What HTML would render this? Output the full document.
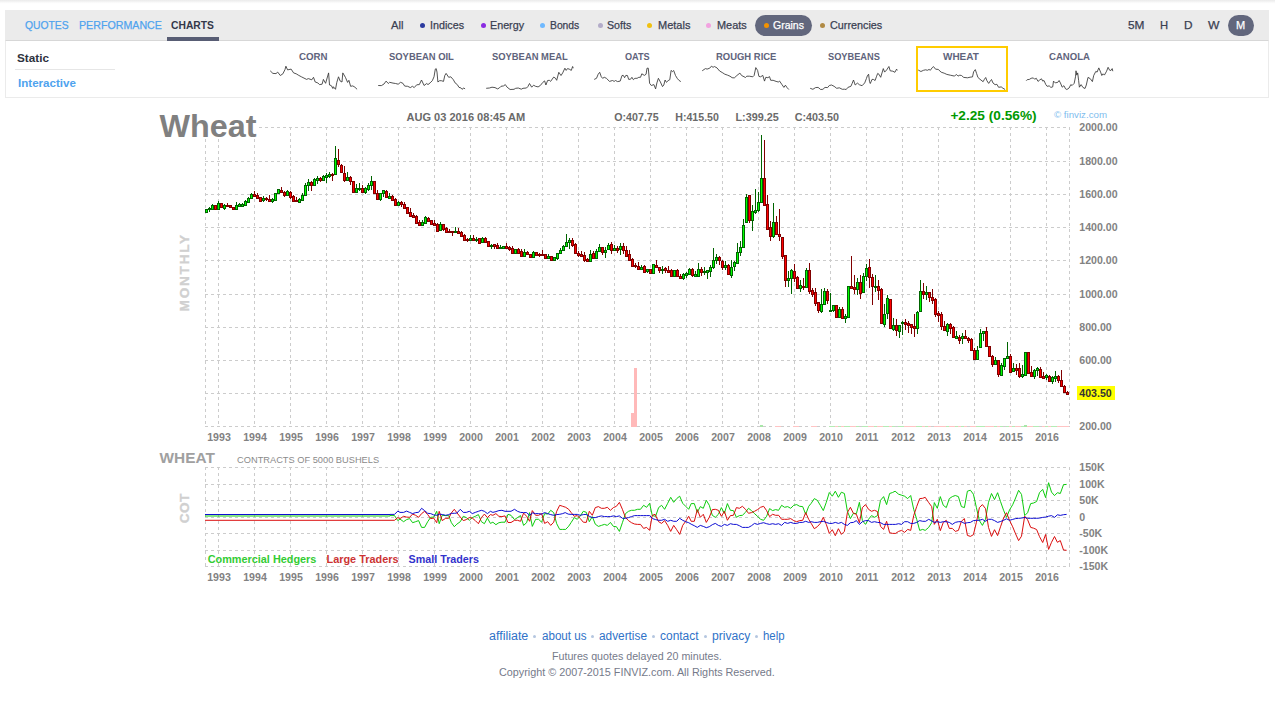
<!DOCTYPE html>
<html lang="en"><head><meta charset="utf-8"><title>Futures Charts - Wheat</title>
<style>
html,body{margin:0;padding:0;background:#fff}
body{width:1275px;height:722px;position:relative;overflow:hidden;font-family:"Liberation Sans", sans-serif}
.t{position:absolute;white-space:nowrap;line-height:1;transform-origin:0 85%;display:block}
#topshade{position:absolute;left:0;top:0;width:1275px;height:4px;background:linear-gradient(#ebebeb 0,#f1f1f1 30%,#fdfdfd 75%,#fff 100%)}
#bar{position:absolute;left:5px;top:10px;width:1264px;height:30px;background:#ebebeb}
#panel{position:absolute;left:5px;top:40px;width:1262px;height:56px;border:1px solid #ebebeb;border-top-color:#d7d7d7;background:#fff}
#tabline{position:absolute;left:167px;top:37px;width:52px;height:4px;background:#585d74}
.pill{position:absolute;background:#62677d;border-radius:11px;height:21px;top:15px}
.dot{position:absolute;width:5px;height:5px;border-radius:50%;top:22.5px}
.fdot{position:absolute;width:3px;height:3px;border-radius:50%;top:635px;background:#b5c6e0}
#sep{position:absolute;left:15px;top:69px;width:100px;height:1px;background:#e6e6e6}
#sel{position:absolute;left:916px;top:46px;width:88px;height:42px;border:2px solid #ffcc00}
svg{position:absolute;left:0;top:0}
svg text{white-space:pre}
</style></head><body>
<div id="topshade"></div>
<div id="bar"></div><div id="panel"></div><div id="tabline"></div>
<div class="pill" style="left:755px;width:57px"></div>
<div class="pill" style="left:1228px;width:26px"></div>
<div class="dot" style="left:420.4px;background:#2b3a9f"></div>
<div class="dot" style="left:480.5px;background:#8a2be2"></div>
<div class="dot" style="left:540.1px;background:#6fb9ff"></div>
<div class="dot" style="left:597.5px;background:#b3acc9"></div>
<div class="dot" style="left:647.3px;background:#f0c010"></div>
<div class="dot" style="left:706.3px;background:#f2a2e0"></div>
<div class="dot" style="left:763.5px;background:#f39200"></div>
<div class="dot" style="left:820.1px;background:#b08a44"></div>
<div class="fdot" style="left:533.3px"></div>
<div class="fdot" style="left:590.5px"></div>
<div class="fdot" style="left:652.0px"></div>
<div class="fdot" style="left:703.5px"></div>
<div class="fdot" style="left:755.2px"></div>
<div id="sep"></div><div id="sel"></div>
<a class="t" id="t0" style="left:25px;top:20.27px;font-size:11.5px;font-weight:normal;color:#4fa3ee;transform:scale(0.8980,1);-webkit-text-stroke:0.25px #4fa3ee">QUOTES</a>
<a class="t" id="t1" style="left:79px;top:20.27px;font-size:11.5px;font-weight:normal;color:#4fa3ee;transform:scale(0.9270,1);-webkit-text-stroke:0.25px #4fa3ee">PERFORMANCE</a>
<span class="t" id="t2" style="left:171px;top:20.27px;font-size:11.5px;font-weight:bold;color:#33384a;transform:scale(0.8958,1)">CHARTS</span>
<span class="t" id="t3" style="left:391px;top:20.27px;font-size:11.5px;font-weight:normal;color:#3a3f52;transform:scale(0.9769,1);-webkit-text-stroke:0.25px #3a3f52">All</span>
<span class="t" id="t4" style="left:430.4px;top:20.27px;font-size:11.5px;font-weight:normal;color:#3a3f52;transform:scale(0.9333,1);-webkit-text-stroke:0.25px #3a3f52">Indices</span>
<span class="t" id="t5" style="left:490.4px;top:20.27px;font-size:11.5px;font-weight:normal;color:#3a3f52;transform:scale(0.9333,1);-webkit-text-stroke:0.25px #3a3f52">Energy</span>
<span class="t" id="t6" style="left:550.4px;top:20.27px;font-size:11.5px;font-weight:normal;color:#3a3f52;transform:scale(0.8970,1);-webkit-text-stroke:0.25px #3a3f52">Bonds</span>
<span class="t" id="t7" style="left:607px;top:20.27px;font-size:11.5px;font-weight:normal;color:#3a3f52;transform:scale(0.9231,1);-webkit-text-stroke:0.25px #3a3f52">Softs</span>
<span class="t" id="t8" style="left:657.5px;top:20.27px;font-size:11.5px;font-weight:normal;color:#3a3f52;transform:scale(0.9559,1);-webkit-text-stroke:0.25px #3a3f52">Metals</span>
<span class="t" id="t9" style="left:716.5px;top:20.27px;font-size:11.5px;font-weight:normal;color:#3a3f52;transform:scale(0.9516,1);-webkit-text-stroke:0.25px #3a3f52">Meats</span>
<span class="t" id="t10" style="left:772.9px;top:20.27px;font-size:11.5px;font-weight:normal;color:#ffffff;transform:scale(0.9147,1);-webkit-text-stroke:0.25px #ffffff">Grains</span>
<span class="t" id="t11" style="left:830.4px;top:20.27px;font-size:11.5px;font-weight:normal;color:#3a3f52;transform:scale(0.9393,1);-webkit-text-stroke:0.25px #3a3f52">Currencies</span>
<span class="t" id="t12" style="left:1127.5px;top:20.27px;font-size:11.5px;font-weight:normal;color:#3a3f52;transform:scale(1.0312,1);-webkit-text-stroke:0.25px #3a3f52">5M</span>
<span class="t" id="t13" style="left:1160.4px;top:20.27px;font-size:11.5px;font-weight:normal;color:#3a3f52;transform:scale(0.9750,1);-webkit-text-stroke:0.25px #3a3f52">H</span>
<span class="t" id="t14" style="left:1184.4px;top:20.27px;font-size:11.5px;font-weight:normal;color:#3a3f52;transform:scale(1.0250,1);-webkit-text-stroke:0.25px #3a3f52">D</span>
<span class="t" id="t15" style="left:1208.4px;top:20.27px;font-size:11.5px;font-weight:normal;color:#3a3f52;transform:scale(1.0545,1);-webkit-text-stroke:0.25px #3a3f52">W</span>
<span class="t" id="t16" style="left:1235.9px;top:20.27px;font-size:11.5px;font-weight:normal;color:#ffffff;transform:scale(0.9600,1);-webkit-text-stroke:0.25px #ffffff">M</span>
<span class="t" id="t17" style="left:16.7px;top:52.97px;font-size:11.5px;font-weight:bold;color:#2e3240;transform:scale(1.0194,1)">Static</span>
<a class="t" id="t18" style="left:17.6px;top:78.27px;font-size:11.5px;font-weight:bold;color:#4fa3ee;transform:scale(1.0069,1)">Interactive</a>
<span class="t" id="t19" style="left:299.3px;top:52.37px;font-size:10.2px;font-weight:bold;color:#5f647c;transform:scale(0.9500,1) rotate(0.03deg)">CORN</span>
<span class="t" id="t20" style="left:388.9px;top:52.37px;font-size:10.2px;font-weight:bold;color:#5f647c;transform:scale(0.9243,1) rotate(0.03deg)">SOYBEAN OIL</span>
<span class="t" id="t21" style="left:491.6px;top:52.37px;font-size:10.2px;font-weight:bold;color:#5f647c;transform:scale(0.9220,1) rotate(0.03deg)">SOYBEAN MEAL</span>
<span class="t" id="t22" style="left:624.9px;top:52.37px;font-size:10.2px;font-weight:bold;color:#5f647c;transform:scale(0.8964,1) rotate(0.03deg)">OATS</span>
<span class="t" id="t23" style="left:715.5px;top:52.37px;font-size:10.2px;font-weight:bold;color:#5f647c;transform:scale(0.9277,1) rotate(0.03deg)">ROUGH RICE</span>
<span class="t" id="t24" style="left:827.8px;top:52.37px;font-size:10.2px;font-weight:bold;color:#5f647c;transform:scale(0.9070,1) rotate(0.03deg)">SOYBEANS</span>
<span class="t" id="t25" style="left:943.4px;top:52.37px;font-size:10.2px;font-weight:bold;color:#5f647c;transform:scale(0.9784,1) rotate(0.03deg)">WHEAT</span>
<span class="t" id="t26" style="left:1049px;top:52.37px;font-size:10.2px;font-weight:bold;color:#5f647c;transform:scale(0.9386,1) rotate(0.03deg)">CANOLA</span>
<a class="t" id="t27" style="left:489.2px;top:629.84px;font-size:12px;font-weight:normal;color:#2f72c8;transform:scale(1.0395,1)">affiliate</a>
<a class="t" id="t28" style="left:541.5px;top:629.84px;font-size:12px;font-weight:normal;color:#2f72c8;transform:scale(0.9674,1)">about us</a>
<a class="t" id="t29" style="left:598.5px;top:629.84px;font-size:12px;font-weight:normal;color:#2f72c8;transform:scale(0.9857,1)">advertise</a>
<a class="t" id="t30" style="left:659.9px;top:629.84px;font-size:12px;font-weight:normal;color:#2f72c8;transform:scale(0.9974,1)">contact</a>
<a class="t" id="t31" style="left:711.6px;top:629.84px;font-size:12px;font-weight:normal;color:#2f72c8;transform:scale(1.0105,1)">privacy</a>
<a class="t" id="t32" style="left:762.8px;top:629.84px;font-size:12px;font-weight:normal;color:#2f72c8;transform:scale(0.9522,1)">help</a>
<span class="t" id="t33" style="left:552.1px;top:651.19px;font-size:11px;font-weight:normal;color:#757a8a;transform:scale(0.9709,1)">Futures quotes delayed 20 minutes.</span>
<span class="t" id="t34" style="left:498.8px;top:667.19px;font-size:11px;font-weight:normal;color:#757a8a;transform:scale(0.9822,1)">Copyright © 2007-2015 FINVIZ.com. All Rights Reserved.</span>
<svg width="1275" height="722" viewBox="0 0 1275 722">
<path d="M270.2 70.8 L272.9 73.4 L276.0 73.6 L277.7 72.1 L280.3 75.5 L282.9 73.8 L285.0 69.5 L285.9 66.2 L287.6 69.9 L291.1 69.1 L293.6 72.9 L296.2 73.8 L298.8 75.4 L301.4 76.8 L304.0 78.1 L306.6 79.4 L308.3 78.6 L311.8 79.8 L313.5 77.3 L315.2 82.0 L317.8 82.9 L319.5 84.6 L322.1 84.2 L323.4 79.4 L325.6 83.3 L328.6 72.9 L329.5 85.0 L331.2 85.5 L332.9 88.5 L333.3 86.7 L335.5 89.3 L336.8 82.4 L338.5 76.8 L340.2 81.1 L342.0 82.0 L342.8 72.9 L345.4 77.3 L347.6 82.4 L348.9 80.3 L350.6 86.3 L352.8 85.9 L354.9 87.2 L357.1 89.3" fill="none" stroke="#353535" stroke-width="0.85" stroke-linejoin="round"/>
<path d="M378.2 85.5 L381.4 85.6 L384.0 84.0 L386.1 81.1 L388.3 83.5 L389.6 82.3 L393.0 83.1 L395.6 83.5 L398.2 84.2 L400.6 82.3 L402.9 83.3 L404.7 86.1 L407.7 86.3 L410.3 87.6 L412.4 86.3 L414.2 87.6 L416.7 84.8 L419.3 84.6 L421.5 80.0 L424.1 85.5 L426.7 83.5 L428.0 84.6 L430.1 82.9 L432.3 80.7 L434.0 76.8 L435.3 69.1 L436.2 68.6 L437.0 72.1 L437.9 82.0 L439.6 80.7 L441.3 80.7 L443.5 81.4 L444.8 75.5 L446.1 73.4 L448.7 77.3 L450.8 76.8 L453.4 79.8 L455.1 82.9 L457.3 84.6 L459.0 87.4 L460.8 87.8 L462.0 89.3 L463.8 88.0 L465.1 88.9" fill="none" stroke="#353535" stroke-width="0.85" stroke-linejoin="round"/>
<path d="M486.2 88.3 L489.4 88.0 L492.0 87.2 L495.0 87.6 L497.6 88.9 L499.3 88.0 L501.0 86.3 L503.6 85.9 L505.3 84.6 L507.1 87.2 L510.1 89.5 L514.0 89.3 L515.7 88.3 L518.3 88.0 L521.3 89.2 L523.0 88.3 L526.5 88.0 L527.8 86.7 L529.5 83.5 L531.7 87.2 L533.6 85.2 L535.5 86.3 L538.1 86.9 L540.3 85.5 L542.9 82.3 L544.6 80.9 L545.9 85.0 L547.6 80.5 L549.3 80.3 L550.6 81.4 L553.7 77.1 L555.4 78.1 L556.7 80.3 L558.8 72.3 L561.0 75.5 L562.7 72.9 L564.9 68.2 L566.2 70.4 L567.5 68.6 L569.2 69.1 L571.3 70.4 L572.6 66.5 L573.3 68.2" fill="none" stroke="#353535" stroke-width="0.85" stroke-linejoin="round"/>
<path d="M594.2 79.4 L596.5 78.3 L598.2 74.2 L599.7 72.3 L601.3 76.8 L602.6 78.3 L604.3 77.3 L606.4 78.3 L609.5 81.4 L612.5 80.5 L614.2 81.4 L615.5 80.5 L617.6 81.6 L620.2 81.1 L622.0 75.5 L623.3 75.4 L624.6 77.7 L625.8 75.4 L627.4 75.5 L628.7 79.4 L630.6 79.2 L631.9 77.3 L633.4 79.7 L634.9 78.3 L637.1 78.3 L638.8 77.3 L640.5 77.3 L641.8 73.8 L644.4 75.4 L646.1 74.2 L647.0 68.2 L648.3 68.2 L649.6 83.3 L651.3 85.5 L653.9 84.6 L655.6 88.9 L656.9 82.9 L658.4 78.3 L660.4 82.0 L662.5 86.6 L663.8 85.0 L665.1 80.0 L666.4 82.3 L668.1 80.7 L669.8 79.7 L671.1 70.4 L672.4 71.6 L673.7 70.5 L675.5 75.5 L677.2 78.3 L678.9 80.3 L680.8 81.6" fill="none" stroke="#353535" stroke-width="0.85" stroke-linejoin="round"/>
<path d="M702.2 70.8 L705.4 68.6 L707.1 69.1 L709.7 68.2 L711.4 66.2 L713.1 67.3 L714.4 66.5 L717.0 67.9 L719.6 71.0 L722.2 72.5 L724.8 74.2 L727.4 75.1 L730.0 76.2 L732.1 77.7 L734.3 77.9 L736.9 75.5 L739.9 73.1 L741.6 75.5 L745.5 77.5 L746.8 76.2 L749.4 76.2 L752.8 76.8 L754.1 75.5 L755.8 67.6 L757.6 70.4 L758.9 76.4 L760.6 76.8 L762.8 75.4 L764.5 81.1 L765.8 77.3 L767.9 77.7 L769.5 76.6 L770.7 80.3 L773.1 80.3 L776.1 81.4 L778.3 82.0 L779.6 81.1 L781.7 84.2 L783.9 87.4 L785.4 85.2 L786.9 87.4 L788.8 89.5" fill="none" stroke="#353535" stroke-width="0.85" stroke-linejoin="round"/>
<path d="M810.2 88.3 L812.9 89.3 L815.5 87.6 L818.1 87.4 L820.7 89.5 L822.9 89.3 L825.0 87.4 L827.6 87.6 L829.3 85.5 L831.5 85.0 L834.1 86.3 L836.7 88.3 L839.3 87.8 L842.3 89.3 L844.4 89.2 L846.2 89.5 L847.9 87.4 L850.9 86.3 L852.2 83.3 L853.5 80.0 L855.2 85.0 L857.4 83.1 L859.5 84.8 L862.1 85.7 L864.7 82.9 L866.4 78.6 L867.3 76.0 L868.6 74.2 L869.5 81.6 L870.3 83.5 L872.0 79.4 L873.3 79.4 L875.1 80.5 L876.4 76.8 L877.7 73.4 L878.9 74.2 L880.7 77.3 L883.3 68.6 L884.6 72.1 L886.7 69.9 L888.9 66.5 L890.2 70.8 L892.8 71.2 L894.9 72.3 L896.6 69.1 L897.3 70.4" fill="none" stroke="#353535" stroke-width="0.85" stroke-linejoin="round"/>
<path d="M918.2 70.0 L920.9 71.5 L923.5 70.3 L925.7 69.8 L927.4 70.3 L929.1 69.4 L930.3 70.3 L932.2 67.7 L933.5 66.6 L935.6 69.2 L938.2 69.4 L941.2 72.2 L944.2 73.2 L946.8 74.4 L950.3 75.2 L954.6 76.1 L956.3 74.4 L958.0 76.1 L959.8 75.2 L961.5 75.5 L963.7 77.4 L967.5 77.8 L970.1 77.2 L972.5 76.9 L973.6 71.8 L975.3 69.6 L976.6 73.5 L977.9 77.4 L980.0 79.3 L983.1 81.7 L984.4 79.3 L985.7 77.5 L986.9 80.7 L988.7 83.4 L990.4 80.8 L991.5 79.5 L993.0 83.0 L995.1 84.7 L996.9 84.3 L998.6 87.3 L1001.2 86.9 L1002.9 88.2 L1005.1 89.5" fill="none" stroke="#353535" stroke-width="0.85" stroke-linejoin="round"/>
<path d="M1026.2 80.7 L1027.2 79.7 L1029.4 79.4 L1031.1 78.3 L1033.3 77.9 L1034.6 79.2 L1036.3 78.3 L1038.0 81.4 L1039.7 80.0 L1041.5 78.8 L1042.7 81.1 L1044.0 80.5 L1045.8 84.6 L1047.1 86.3 L1049.2 85.9 L1050.9 87.4 L1052.7 86.9 L1053.5 81.1 L1055.3 82.9 L1057.8 82.3 L1059.1 80.5 L1060.4 82.9 L1062.2 87.2 L1063.9 85.7 L1065.6 88.9 L1066.9 89.5 L1069.1 88.0 L1070.8 84.6 L1072.1 85.5 L1074.2 83.3 L1075.5 76.8 L1076.0 70.8 L1076.8 75.1 L1077.7 72.9 L1078.6 80.3 L1079.4 87.2 L1081.1 84.6 L1082.9 87.4 L1085.0 88.5 L1086.3 85.0 L1088.0 77.4 L1090.2 78.6 L1092.4 81.6 L1093.7 75.5 L1095.8 71.4 L1097.1 72.1 L1098.8 67.9 L1100.6 72.1 L1101.8 75.5 L1103.1 73.8 L1104.4 75.1 L1106.6 71.2 L1108.1 67.3 L1109.6 70.2 L1110.9 70.5 L1112.2 68.6 L1112.8 71.2" fill="none" stroke="#353535" stroke-width="0.85" stroke-linejoin="round"/>
<g stroke="#cccccc" stroke-width="1" stroke-dasharray="3 3" shape-rendering="crispEdges" fill="none">
<line x1="205" y1="127.5" x2="1070" y2="127.5"/>
<line x1="205" y1="161.5" x2="1070" y2="161.5"/>
<line x1="205" y1="194.5" x2="1070" y2="194.5"/>
<line x1="205" y1="227.5" x2="1070" y2="227.5"/>
<line x1="205" y1="260.5" x2="1070" y2="260.5"/>
<line x1="205" y1="294.5" x2="1070" y2="294.5"/>
<line x1="205" y1="327.5" x2="1070" y2="327.5"/>
<line x1="205" y1="360.5" x2="1070" y2="360.5"/>
<line x1="205" y1="393.5" x2="1070" y2="393.5"/>
<line x1="205" y1="426.5" x2="1070" y2="426.5"/>
<line x1="205.5" y1="127" x2="205.5" y2="427"/>
<line x1="218.5" y1="127" x2="218.5" y2="427"/>
<line x1="254.5" y1="127" x2="254.5" y2="427"/>
<line x1="290.5" y1="127" x2="290.5" y2="427"/>
<line x1="326.5" y1="127" x2="326.5" y2="427"/>
<line x1="362.5" y1="127" x2="362.5" y2="427"/>
<line x1="398.5" y1="127" x2="398.5" y2="427"/>
<line x1="434.5" y1="127" x2="434.5" y2="427"/>
<line x1="470.5" y1="127" x2="470.5" y2="427"/>
<line x1="506.5" y1="127" x2="506.5" y2="427"/>
<line x1="542.5" y1="127" x2="542.5" y2="427"/>
<line x1="578.5" y1="127" x2="578.5" y2="427"/>
<line x1="614.5" y1="127" x2="614.5" y2="427"/>
<line x1="650.5" y1="127" x2="650.5" y2="427"/>
<line x1="686.5" y1="127" x2="686.5" y2="427"/>
<line x1="722.5" y1="127" x2="722.5" y2="427"/>
<line x1="758.5" y1="127" x2="758.5" y2="427"/>
<line x1="794.5" y1="127" x2="794.5" y2="427"/>
<line x1="830.5" y1="127" x2="830.5" y2="427"/>
<line x1="866.5" y1="127" x2="866.5" y2="427"/>
<line x1="902.5" y1="127" x2="902.5" y2="427"/>
<line x1="938.5" y1="127" x2="938.5" y2="427"/>
<line x1="974.5" y1="127" x2="974.5" y2="427"/>
<line x1="1010.5" y1="127" x2="1010.5" y2="427"/>
<line x1="1046.5" y1="127" x2="1046.5" y2="427"/>
<line x1="1069.5" y1="127" x2="1069.5" y2="427"/>
<line x1="205" y1="467.5" x2="1070" y2="467.5"/>
<line x1="205" y1="484.5" x2="1070" y2="484.5"/>
<line x1="205" y1="500.5" x2="1070" y2="500.5"/>
<line x1="205" y1="517.5" x2="1070" y2="517.5"/>
<line x1="205" y1="533.5" x2="1070" y2="533.5"/>
<line x1="205" y1="550.5" x2="1070" y2="550.5"/>
<line x1="205" y1="566.5" x2="1070" y2="566.5"/>
<line x1="205.5" y1="467" x2="205.5" y2="567"/>
<line x1="218.5" y1="467" x2="218.5" y2="567"/>
<line x1="254.5" y1="467" x2="254.5" y2="567"/>
<line x1="290.5" y1="467" x2="290.5" y2="567"/>
<line x1="326.5" y1="467" x2="326.5" y2="567"/>
<line x1="362.5" y1="467" x2="362.5" y2="567"/>
<line x1="398.5" y1="467" x2="398.5" y2="567"/>
<line x1="434.5" y1="467" x2="434.5" y2="567"/>
<line x1="470.5" y1="467" x2="470.5" y2="567"/>
<line x1="506.5" y1="467" x2="506.5" y2="567"/>
<line x1="542.5" y1="467" x2="542.5" y2="567"/>
<line x1="578.5" y1="467" x2="578.5" y2="567"/>
<line x1="614.5" y1="467" x2="614.5" y2="567"/>
<line x1="650.5" y1="467" x2="650.5" y2="567"/>
<line x1="686.5" y1="467" x2="686.5" y2="567"/>
<line x1="722.5" y1="467" x2="722.5" y2="567"/>
<line x1="758.5" y1="467" x2="758.5" y2="567"/>
<line x1="794.5" y1="467" x2="794.5" y2="567"/>
<line x1="830.5" y1="467" x2="830.5" y2="567"/>
<line x1="866.5" y1="467" x2="866.5" y2="567"/>
<line x1="902.5" y1="467" x2="902.5" y2="567"/>
<line x1="938.5" y1="467" x2="938.5" y2="567"/>
<line x1="974.5" y1="467" x2="974.5" y2="567"/>
<line x1="1010.5" y1="467" x2="1010.5" y2="567"/>
<line x1="1046.5" y1="467" x2="1046.5" y2="567"/>
<line x1="1069.5" y1="467" x2="1069.5" y2="567"/>
</g>
<rect x="155" y="105" width="103" height="34" fill="#fff"/>
<g shape-rendering="crispEdges">
<rect x="631" y="413" width="3" height="14" fill="#ffb9b9"/>
<rect x="634" y="368" width="3" height="59" fill="#ffb9b9"/>
<rect x="760" y="426" width="3" height="1" fill="#b4ecb4"/>
<rect x="775" y="426" width="3" height="1" fill="#ffc4c4"/>
<rect x="778" y="426" width="3" height="1" fill="#ffc4c4"/>
<rect x="793" y="426" width="3" height="1" fill="#ffc4c4"/>
<rect x="796" y="426" width="3" height="1" fill="#ffc4c4"/>
<rect x="811" y="426" width="3" height="1" fill="#ffc4c4"/>
<rect x="814" y="426" width="3" height="1" fill="#ffc4c4"/>
<rect x="829" y="426" width="3" height="1" fill="#b4ecb4"/>
<rect x="832" y="426" width="3" height="1" fill="#b4ecb4"/>
<rect x="835" y="426" width="3" height="1" fill="#ffc4c4"/>
<rect x="838" y="426" width="3" height="1" fill="#b4ecb4"/>
<rect x="841" y="426" width="3" height="1" fill="#ffc4c4"/>
<rect x="844" y="426" width="3" height="1" fill="#b4ecb4"/>
<rect x="847" y="426" width="3" height="1" fill="#b4ecb4"/>
<rect x="850" y="426" width="3" height="1" fill="#ffc4c4"/>
<rect x="853" y="426" width="3" height="1" fill="#ffc4c4"/>
<rect x="856" y="426" width="3" height="1" fill="#b4ecb4"/>
<rect x="862" y="426" width="3" height="1" fill="#b4ecb4"/>
<rect x="865" y="426" width="3" height="1" fill="#b4ecb4"/>
<rect x="868" y="426" width="3" height="1" fill="#ffc4c4"/>
<rect x="871" y="426" width="3" height="1" fill="#ffc4c4"/>
<rect x="874" y="426" width="3" height="1" fill="#b4ecb4"/>
<rect x="877" y="426" width="3" height="1" fill="#ffc4c4"/>
<rect x="880" y="426" width="3" height="1" fill="#ffc4c4"/>
<rect x="883" y="426" width="3" height="1" fill="#b4ecb4"/>
<rect x="886" y="426" width="3" height="1" fill="#b4ecb4"/>
<rect x="889" y="426" width="3" height="1" fill="#ffc4c4"/>
<rect x="892" y="426" width="3" height="1" fill="#b4ecb4"/>
<rect x="898" y="426" width="3" height="1" fill="#b4ecb4"/>
<rect x="901" y="426" width="3" height="1" fill="#b4ecb4"/>
<rect x="904" y="426" width="3" height="1" fill="#ffc4c4"/>
<rect x="907" y="426" width="3" height="1" fill="#ffc4c4"/>
<rect x="910" y="426" width="3" height="1" fill="#ffc4c4"/>
<rect x="913" y="426" width="3" height="1" fill="#ffc4c4"/>
<rect x="916" y="426" width="3" height="1" fill="#b4ecb4"/>
<rect x="919" y="426" width="3" height="1" fill="#b4ecb4"/>
<rect x="922" y="426" width="3" height="1" fill="#ffc4c4"/>
<rect x="925" y="426" width="3" height="1" fill="#b4ecb4"/>
<rect x="928" y="426" width="3" height="1" fill="#ffc4c4"/>
<rect x="934" y="426" width="3" height="1" fill="#ffc4c4"/>
<rect x="937" y="426" width="3" height="1" fill="#ffc4c4"/>
<rect x="940" y="426" width="3" height="1" fill="#ffc4c4"/>
<rect x="943" y="426" width="3" height="1" fill="#ffc4c4"/>
<rect x="946" y="426" width="3" height="1" fill="#b4ecb4"/>
<rect x="949" y="426" width="3" height="1" fill="#ffc4c4"/>
<rect x="952" y="426" width="3" height="1" fill="#ffc4c4"/>
<rect x="955" y="426" width="3" height="1" fill="#b4ecb4"/>
<rect x="958" y="426" width="3" height="1" fill="#ffc4c4"/>
<rect x="961" y="426" width="3" height="1" fill="#b4ecb4"/>
<rect x="964" y="426" width="3" height="1" fill="#ffc4c4"/>
<rect x="970" y="426" width="3" height="1" fill="#ffc4c4"/>
<rect x="973" y="426" width="3" height="1" fill="#ffc4c4"/>
<rect x="976" y="426" width="3" height="1" fill="#b4ecb4"/>
<rect x="979" y="426" width="3" height="1" fill="#b4ecb4"/>
<rect x="982" y="426" width="3" height="1" fill="#b4ecb4"/>
<rect x="985" y="426" width="3" height="1" fill="#ffc4c4"/>
<rect x="988" y="426" width="3" height="1" fill="#ffc4c4"/>
<rect x="991" y="426" width="3" height="1" fill="#ffc4c4"/>
<rect x="994" y="426" width="3" height="1" fill="#b4ecb4"/>
<rect x="997" y="426" width="3" height="1" fill="#ffc4c4"/>
<rect x="1000" y="426" width="3" height="1" fill="#b4ecb4"/>
<rect x="1006" y="426" width="3" height="1" fill="#b4ecb4"/>
<rect x="1009" y="426" width="3" height="1" fill="#ffc4c4"/>
<rect x="1012" y="426" width="3" height="1" fill="#b4ecb4"/>
<rect x="1015" y="426" width="3" height="1" fill="#ffc4c4"/>
<rect x="1018" y="426" width="3" height="1" fill="#ffc4c4"/>
<rect x="1021" y="426" width="3" height="1" fill="#b4ecb4"/>
<rect x="1024" y="426" width="3" height="1" fill="#b4ecb4"/>
<rect x="1027" y="426" width="3" height="1" fill="#ffc4c4"/>
<rect x="1030" y="426" width="3" height="1" fill="#ffc4c4"/>
<rect x="1033" y="426" width="3" height="1" fill="#b4ecb4"/>
<rect x="1036" y="426" width="3" height="1" fill="#b4ecb4"/>
<rect x="1042" y="426" width="3" height="1" fill="#ffc4c4"/>
<rect x="1045" y="426" width="3" height="1" fill="#b4ecb4"/>
<rect x="1048" y="426" width="3" height="1" fill="#ffc4c4"/>
<rect x="1051" y="426" width="3" height="1" fill="#b4ecb4"/>
<rect x="1054" y="426" width="3" height="1" fill="#b4ecb4"/>
<rect x="1057" y="426" width="3" height="1" fill="#ffc4c4"/>
<rect x="1060" y="426" width="3" height="1" fill="#ffc4c4"/>
<rect x="1063" y="426" width="3" height="1" fill="#ffc4c4"/>
<rect x="1066" y="426" width="3" height="1" fill="#ffc4c4"/>
<rect x="1024" y="425" width="3" height="2" fill="#a8e6a8"/>
<rect x="760" y="425" width="3" height="2" fill="#a8e6a8"/>
</g>
<g shape-rendering="crispEdges">
<rect x="205" y="209" width="3" height="4" fill="#006400"/>
<rect x="206" y="210" width="1" height="2" fill="#00ff00"/>
<rect x="209" y="207" width="1" height="5" fill="#006400"/>
<rect x="208" y="208" width="3" height="2" fill="#006400"/>
<rect x="212" y="204" width="1" height="6" fill="#006400"/>
<rect x="211" y="205" width="3" height="5" fill="#006400"/>
<rect x="212" y="206" width="1" height="3" fill="#00ff00"/>
<rect x="214" y="205" width="3" height="5" fill="#800000"/>
<rect x="215" y="206" width="1" height="3" fill="#ff0000"/>
<rect x="218" y="201" width="1" height="9" fill="#006400"/>
<rect x="217" y="203" width="3" height="7" fill="#006400"/>
<rect x="218" y="204" width="1" height="5" fill="#00ff00"/>
<rect x="220" y="203" width="3" height="5" fill="#800000"/>
<rect x="221" y="204" width="1" height="3" fill="#ff0000"/>
<rect x="224" y="204" width="1" height="6" fill="#006400"/>
<rect x="223" y="205" width="3" height="4" fill="#006400"/>
<rect x="224" y="206" width="1" height="2" fill="#00ff00"/>
<rect x="227" y="203" width="1" height="4" fill="#800000"/>
<rect x="226" y="205" width="3" height="2" fill="#800000"/>
<rect x="229" y="205" width="3" height="3" fill="#800000"/>
<rect x="230" y="206" width="1" height="1" fill="#ff0000"/>
<rect x="232" y="207" width="3" height="3" fill="#800000"/>
<rect x="233" y="208" width="1" height="1" fill="#ff0000"/>
<rect x="236" y="202" width="1" height="8" fill="#006400"/>
<rect x="235" y="205" width="3" height="5" fill="#006400"/>
<rect x="236" y="206" width="1" height="3" fill="#00ff00"/>
<rect x="239" y="203" width="1" height="4" fill="#006400"/>
<rect x="238" y="204" width="3" height="3" fill="#006400"/>
<rect x="239" y="205" width="1" height="1" fill="#00ff00"/>
<rect x="242" y="203" width="1" height="4" fill="#006400"/>
<rect x="241" y="204" width="3" height="3" fill="#006400"/>
<rect x="242" y="205" width="1" height="1" fill="#00ff00"/>
<rect x="245" y="200" width="1" height="6" fill="#006400"/>
<rect x="244" y="201" width="3" height="5" fill="#006400"/>
<rect x="245" y="202" width="1" height="3" fill="#00ff00"/>
<rect x="248" y="197" width="1" height="6" fill="#006400"/>
<rect x="247" y="198" width="3" height="5" fill="#006400"/>
<rect x="248" y="199" width="1" height="3" fill="#00ff00"/>
<rect x="251" y="193" width="1" height="6" fill="#006400"/>
<rect x="250" y="194" width="3" height="5" fill="#006400"/>
<rect x="251" y="195" width="1" height="3" fill="#00ff00"/>
<rect x="254" y="191" width="1" height="6" fill="#800000"/>
<rect x="253" y="194" width="3" height="3" fill="#800000"/>
<rect x="254" y="195" width="1" height="1" fill="#ff0000"/>
<rect x="257" y="193" width="1" height="6" fill="#800000"/>
<rect x="256" y="195" width="3" height="4" fill="#800000"/>
<rect x="257" y="196" width="1" height="2" fill="#ff0000"/>
<rect x="259" y="197" width="3" height="5" fill="#800000"/>
<rect x="260" y="198" width="1" height="3" fill="#ff0000"/>
<rect x="263" y="196" width="1" height="6" fill="#006400"/>
<rect x="262" y="198" width="3" height="3" fill="#006400"/>
<rect x="263" y="199" width="1" height="1" fill="#00ff00"/>
<rect x="266" y="197" width="1" height="4" fill="#800000"/>
<rect x="265" y="198" width="3" height="2" fill="#800000"/>
<rect x="269" y="195" width="1" height="7" fill="#800000"/>
<rect x="268" y="199" width="3" height="3" fill="#800000"/>
<rect x="269" y="200" width="1" height="1" fill="#ff0000"/>
<rect x="272" y="198" width="1" height="5" fill="#006400"/>
<rect x="271" y="199" width="3" height="3" fill="#006400"/>
<rect x="272" y="200" width="1" height="1" fill="#00ff00"/>
<rect x="274" y="193" width="3" height="8" fill="#006400"/>
<rect x="275" y="194" width="1" height="6" fill="#00ff00"/>
<rect x="277" y="189" width="3" height="5" fill="#006400"/>
<rect x="278" y="190" width="1" height="3" fill="#00ff00"/>
<rect x="281" y="187" width="1" height="6" fill="#800000"/>
<rect x="280" y="190" width="3" height="3" fill="#800000"/>
<rect x="281" y="191" width="1" height="1" fill="#ff0000"/>
<rect x="284" y="191" width="1" height="6" fill="#800000"/>
<rect x="283" y="192" width="3" height="4" fill="#800000"/>
<rect x="284" y="193" width="1" height="2" fill="#ff0000"/>
<rect x="287" y="190" width="1" height="6" fill="#006400"/>
<rect x="286" y="191" width="3" height="5" fill="#006400"/>
<rect x="287" y="192" width="1" height="3" fill="#00ff00"/>
<rect x="290" y="191" width="1" height="8" fill="#800000"/>
<rect x="289" y="192" width="3" height="6" fill="#800000"/>
<rect x="290" y="193" width="1" height="4" fill="#ff0000"/>
<rect x="293" y="195" width="1" height="7" fill="#800000"/>
<rect x="292" y="196" width="3" height="6" fill="#800000"/>
<rect x="293" y="197" width="1" height="4" fill="#ff0000"/>
<rect x="296" y="197" width="1" height="5" fill="#800000"/>
<rect x="295" y="200" width="3" height="2" fill="#800000"/>
<rect x="299" y="198" width="1" height="5" fill="#006400"/>
<rect x="298" y="199" width="3" height="4" fill="#006400"/>
<rect x="299" y="200" width="1" height="2" fill="#00ff00"/>
<rect x="302" y="193" width="1" height="8" fill="#006400"/>
<rect x="301" y="195" width="3" height="6" fill="#006400"/>
<rect x="302" y="196" width="1" height="4" fill="#00ff00"/>
<rect x="305" y="183" width="1" height="13" fill="#006400"/>
<rect x="304" y="185" width="3" height="11" fill="#006400"/>
<rect x="305" y="186" width="1" height="9" fill="#00ff00"/>
<rect x="308" y="179" width="1" height="12" fill="#006400"/>
<rect x="307" y="182" width="3" height="4" fill="#006400"/>
<rect x="308" y="183" width="1" height="2" fill="#00ff00"/>
<rect x="311" y="181" width="1" height="10" fill="#800000"/>
<rect x="310" y="182" width="3" height="4" fill="#800000"/>
<rect x="311" y="183" width="1" height="2" fill="#ff0000"/>
<rect x="314" y="178" width="1" height="8" fill="#006400"/>
<rect x="313" y="179" width="3" height="7" fill="#006400"/>
<rect x="314" y="180" width="1" height="5" fill="#00ff00"/>
<rect x="317" y="176" width="1" height="8" fill="#006400"/>
<rect x="316" y="178" width="3" height="3" fill="#006400"/>
<rect x="317" y="179" width="1" height="1" fill="#00ff00"/>
<rect x="320" y="177" width="1" height="5" fill="#800000"/>
<rect x="319" y="178" width="3" height="3" fill="#800000"/>
<rect x="320" y="179" width="1" height="1" fill="#ff0000"/>
<rect x="323" y="175" width="1" height="6" fill="#006400"/>
<rect x="322" y="176" width="3" height="5" fill="#006400"/>
<rect x="323" y="177" width="1" height="3" fill="#00ff00"/>
<rect x="326" y="173" width="1" height="10" fill="#006400"/>
<rect x="325" y="175" width="3" height="3" fill="#006400"/>
<rect x="326" y="176" width="1" height="1" fill="#00ff00"/>
<rect x="329" y="172" width="1" height="6" fill="#006400"/>
<rect x="328" y="174" width="3" height="3" fill="#006400"/>
<rect x="329" y="175" width="1" height="1" fill="#00ff00"/>
<rect x="332" y="173" width="1" height="8" fill="#800000"/>
<rect x="331" y="174" width="3" height="2" fill="#800000"/>
<rect x="335" y="146" width="1" height="29" fill="#006400"/>
<rect x="334" y="158" width="3" height="17" fill="#006400"/>
<rect x="335" y="159" width="1" height="15" fill="#00ff00"/>
<rect x="338" y="149" width="1" height="18" fill="#800000"/>
<rect x="337" y="160" width="3" height="5" fill="#800000"/>
<rect x="338" y="161" width="1" height="3" fill="#ff0000"/>
<rect x="341" y="164" width="1" height="9" fill="#800000"/>
<rect x="340" y="165" width="3" height="8" fill="#800000"/>
<rect x="341" y="166" width="1" height="6" fill="#ff0000"/>
<rect x="344" y="166" width="1" height="16" fill="#800000"/>
<rect x="343" y="173" width="3" height="8" fill="#800000"/>
<rect x="344" y="174" width="1" height="6" fill="#ff0000"/>
<rect x="347" y="172" width="1" height="9" fill="#006400"/>
<rect x="346" y="177" width="3" height="4" fill="#006400"/>
<rect x="347" y="178" width="1" height="2" fill="#00ff00"/>
<rect x="350" y="176" width="1" height="9" fill="#800000"/>
<rect x="349" y="177" width="3" height="5" fill="#800000"/>
<rect x="350" y="178" width="1" height="3" fill="#ff0000"/>
<rect x="352" y="181" width="3" height="12" fill="#800000"/>
<rect x="353" y="182" width="1" height="10" fill="#ff0000"/>
<rect x="356" y="184" width="1" height="9" fill="#006400"/>
<rect x="355" y="188" width="3" height="5" fill="#006400"/>
<rect x="356" y="189" width="1" height="3" fill="#00ff00"/>
<rect x="359" y="183" width="1" height="8" fill="#006400"/>
<rect x="358" y="188" width="3" height="2" fill="#006400"/>
<rect x="362" y="185" width="1" height="8" fill="#800000"/>
<rect x="361" y="188" width="3" height="5" fill="#800000"/>
<rect x="362" y="189" width="1" height="3" fill="#ff0000"/>
<rect x="365" y="187" width="1" height="7" fill="#006400"/>
<rect x="364" y="188" width="3" height="5" fill="#006400"/>
<rect x="365" y="189" width="1" height="3" fill="#00ff00"/>
<rect x="368" y="183" width="1" height="8" fill="#006400"/>
<rect x="367" y="185" width="3" height="5" fill="#006400"/>
<rect x="368" y="186" width="1" height="3" fill="#00ff00"/>
<rect x="371" y="176" width="1" height="14" fill="#006400"/>
<rect x="370" y="181" width="3" height="5" fill="#006400"/>
<rect x="371" y="182" width="1" height="3" fill="#00ff00"/>
<rect x="373" y="181" width="3" height="13" fill="#800000"/>
<rect x="374" y="182" width="1" height="11" fill="#ff0000"/>
<rect x="377" y="190" width="1" height="10" fill="#800000"/>
<rect x="376" y="193" width="3" height="7" fill="#800000"/>
<rect x="377" y="194" width="1" height="5" fill="#ff0000"/>
<rect x="380" y="193" width="1" height="8" fill="#006400"/>
<rect x="379" y="193" width="3" height="7" fill="#006400"/>
<rect x="380" y="194" width="1" height="5" fill="#00ff00"/>
<rect x="383" y="190" width="1" height="7" fill="#006400"/>
<rect x="382" y="190" width="3" height="4" fill="#006400"/>
<rect x="383" y="191" width="1" height="2" fill="#00ff00"/>
<rect x="386" y="190" width="1" height="8" fill="#800000"/>
<rect x="385" y="191" width="3" height="7" fill="#800000"/>
<rect x="386" y="192" width="1" height="5" fill="#ff0000"/>
<rect x="389" y="193" width="1" height="6" fill="#006400"/>
<rect x="388" y="196" width="3" height="3" fill="#006400"/>
<rect x="389" y="197" width="1" height="1" fill="#00ff00"/>
<rect x="392" y="195" width="1" height="6" fill="#800000"/>
<rect x="391" y="196" width="3" height="5" fill="#800000"/>
<rect x="392" y="197" width="1" height="3" fill="#ff0000"/>
<rect x="395" y="198" width="1" height="8" fill="#800000"/>
<rect x="394" y="199" width="3" height="7" fill="#800000"/>
<rect x="395" y="200" width="1" height="5" fill="#ff0000"/>
<rect x="398" y="201" width="1" height="5" fill="#006400"/>
<rect x="397" y="202" width="3" height="4" fill="#006400"/>
<rect x="398" y="203" width="1" height="2" fill="#00ff00"/>
<rect x="401" y="201" width="1" height="6" fill="#800000"/>
<rect x="400" y="202" width="3" height="3" fill="#800000"/>
<rect x="401" y="203" width="1" height="1" fill="#ff0000"/>
<rect x="404" y="202" width="1" height="7" fill="#800000"/>
<rect x="403" y="204" width="3" height="5" fill="#800000"/>
<rect x="404" y="205" width="1" height="3" fill="#ff0000"/>
<rect x="406" y="207" width="3" height="7" fill="#800000"/>
<rect x="407" y="208" width="1" height="5" fill="#ff0000"/>
<rect x="410" y="208" width="1" height="9" fill="#800000"/>
<rect x="409" y="212" width="3" height="5" fill="#800000"/>
<rect x="410" y="213" width="1" height="3" fill="#ff0000"/>
<rect x="413" y="213" width="1" height="5" fill="#800000"/>
<rect x="412" y="215" width="3" height="3" fill="#800000"/>
<rect x="413" y="216" width="1" height="1" fill="#ff0000"/>
<rect x="416" y="215" width="1" height="9" fill="#800000"/>
<rect x="415" y="216" width="3" height="8" fill="#800000"/>
<rect x="416" y="217" width="1" height="6" fill="#ff0000"/>
<rect x="419" y="220" width="1" height="6" fill="#800000"/>
<rect x="418" y="222" width="3" height="4" fill="#800000"/>
<rect x="419" y="223" width="1" height="2" fill="#ff0000"/>
<rect x="422" y="220" width="1" height="6" fill="#006400"/>
<rect x="421" y="222" width="3" height="4" fill="#006400"/>
<rect x="422" y="223" width="1" height="2" fill="#00ff00"/>
<rect x="425" y="216" width="1" height="8" fill="#006400"/>
<rect x="424" y="217" width="3" height="7" fill="#006400"/>
<rect x="425" y="218" width="1" height="5" fill="#00ff00"/>
<rect x="428" y="217" width="1" height="5" fill="#800000"/>
<rect x="427" y="218" width="3" height="4" fill="#800000"/>
<rect x="428" y="219" width="1" height="2" fill="#ff0000"/>
<rect x="430" y="220" width="3" height="5" fill="#800000"/>
<rect x="431" y="221" width="1" height="3" fill="#ff0000"/>
<rect x="434" y="220" width="1" height="6" fill="#800000"/>
<rect x="433" y="223" width="3" height="3" fill="#800000"/>
<rect x="434" y="224" width="1" height="1" fill="#ff0000"/>
<rect x="437" y="223" width="1" height="9" fill="#800000"/>
<rect x="436" y="224" width="3" height="8" fill="#800000"/>
<rect x="437" y="225" width="1" height="6" fill="#ff0000"/>
<rect x="440" y="222" width="1" height="9" fill="#006400"/>
<rect x="439" y="224" width="3" height="7" fill="#006400"/>
<rect x="440" y="225" width="1" height="5" fill="#00ff00"/>
<rect x="443" y="224" width="1" height="7" fill="#800000"/>
<rect x="442" y="224" width="3" height="6" fill="#800000"/>
<rect x="443" y="225" width="1" height="4" fill="#ff0000"/>
<rect x="446" y="227" width="1" height="6" fill="#800000"/>
<rect x="445" y="228" width="3" height="5" fill="#800000"/>
<rect x="446" y="229" width="1" height="3" fill="#ff0000"/>
<rect x="449" y="229" width="1" height="4" fill="#800000"/>
<rect x="448" y="231" width="3" height="2" fill="#800000"/>
<rect x="452" y="231" width="1" height="5" fill="#800000"/>
<rect x="451" y="231" width="3" height="2" fill="#800000"/>
<rect x="455" y="227" width="1" height="6" fill="#006400"/>
<rect x="454" y="231" width="3" height="2" fill="#006400"/>
<rect x="458" y="228" width="1" height="6" fill="#800000"/>
<rect x="457" y="231" width="3" height="3" fill="#800000"/>
<rect x="458" y="232" width="1" height="1" fill="#ff0000"/>
<rect x="461" y="231" width="1" height="6" fill="#800000"/>
<rect x="460" y="232" width="3" height="5" fill="#800000"/>
<rect x="461" y="233" width="1" height="3" fill="#ff0000"/>
<rect x="464" y="234" width="1" height="7" fill="#800000"/>
<rect x="463" y="235" width="3" height="6" fill="#800000"/>
<rect x="464" y="236" width="1" height="4" fill="#ff0000"/>
<rect x="467" y="238" width="1" height="4" fill="#800000"/>
<rect x="466" y="239" width="3" height="2" fill="#800000"/>
<rect x="470" y="235" width="1" height="6" fill="#006400"/>
<rect x="469" y="238" width="3" height="3" fill="#006400"/>
<rect x="470" y="239" width="1" height="1" fill="#00ff00"/>
<rect x="473" y="235" width="1" height="6" fill="#800000"/>
<rect x="472" y="238" width="3" height="3" fill="#800000"/>
<rect x="473" y="239" width="1" height="1" fill="#ff0000"/>
<rect x="476" y="237" width="1" height="5" fill="#006400"/>
<rect x="475" y="239" width="3" height="2" fill="#006400"/>
<rect x="478" y="238" width="3" height="6" fill="#800000"/>
<rect x="479" y="239" width="1" height="4" fill="#ff0000"/>
<rect x="482" y="237" width="1" height="6" fill="#006400"/>
<rect x="481" y="238" width="3" height="5" fill="#006400"/>
<rect x="482" y="239" width="1" height="3" fill="#00ff00"/>
<rect x="485" y="237" width="1" height="6" fill="#800000"/>
<rect x="484" y="238" width="3" height="5" fill="#800000"/>
<rect x="485" y="239" width="1" height="3" fill="#ff0000"/>
<rect x="487" y="241" width="3" height="6" fill="#800000"/>
<rect x="488" y="242" width="1" height="4" fill="#ff0000"/>
<rect x="491" y="244" width="1" height="5" fill="#006400"/>
<rect x="490" y="245" width="3" height="2" fill="#006400"/>
<rect x="494" y="244" width="1" height="5" fill="#800000"/>
<rect x="493" y="244" width="3" height="3" fill="#800000"/>
<rect x="494" y="245" width="1" height="1" fill="#ff0000"/>
<rect x="497" y="243" width="1" height="6" fill="#800000"/>
<rect x="496" y="245" width="3" height="4" fill="#800000"/>
<rect x="497" y="246" width="1" height="2" fill="#ff0000"/>
<rect x="500" y="245" width="1" height="4" fill="#006400"/>
<rect x="499" y="247" width="3" height="2" fill="#006400"/>
<rect x="502" y="246" width="3" height="3" fill="#006400"/>
<rect x="503" y="247" width="1" height="1" fill="#00ff00"/>
<rect x="506" y="243" width="1" height="6" fill="#800000"/>
<rect x="505" y="246" width="3" height="3" fill="#800000"/>
<rect x="506" y="247" width="1" height="1" fill="#ff0000"/>
<rect x="509" y="246" width="1" height="5" fill="#800000"/>
<rect x="508" y="247" width="3" height="3" fill="#800000"/>
<rect x="509" y="248" width="1" height="1" fill="#ff0000"/>
<rect x="512" y="246" width="1" height="8" fill="#800000"/>
<rect x="511" y="248" width="3" height="6" fill="#800000"/>
<rect x="512" y="249" width="1" height="4" fill="#ff0000"/>
<rect x="514" y="249" width="3" height="5" fill="#006400"/>
<rect x="515" y="250" width="1" height="3" fill="#00ff00"/>
<rect x="518" y="248" width="1" height="6" fill="#800000"/>
<rect x="517" y="249" width="3" height="5" fill="#800000"/>
<rect x="518" y="250" width="1" height="3" fill="#ff0000"/>
<rect x="521" y="249" width="1" height="8" fill="#800000"/>
<rect x="520" y="251" width="3" height="6" fill="#800000"/>
<rect x="521" y="252" width="1" height="4" fill="#ff0000"/>
<rect x="524" y="249" width="1" height="8" fill="#006400"/>
<rect x="523" y="252" width="3" height="5" fill="#006400"/>
<rect x="524" y="253" width="1" height="3" fill="#00ff00"/>
<rect x="527" y="251" width="1" height="4" fill="#800000"/>
<rect x="526" y="252" width="3" height="3" fill="#800000"/>
<rect x="527" y="253" width="1" height="1" fill="#ff0000"/>
<rect x="529" y="254" width="3" height="4" fill="#800000"/>
<rect x="530" y="255" width="1" height="2" fill="#ff0000"/>
<rect x="533" y="251" width="1" height="7" fill="#006400"/>
<rect x="532" y="252" width="3" height="6" fill="#006400"/>
<rect x="533" y="253" width="1" height="4" fill="#00ff00"/>
<rect x="535" y="252" width="3" height="4" fill="#800000"/>
<rect x="536" y="253" width="1" height="2" fill="#ff0000"/>
<rect x="539" y="253" width="1" height="4" fill="#800000"/>
<rect x="538" y="254" width="3" height="2" fill="#800000"/>
<rect x="542" y="250" width="1" height="6" fill="#800000"/>
<rect x="541" y="254" width="3" height="2" fill="#800000"/>
<rect x="544" y="254" width="3" height="5" fill="#800000"/>
<rect x="545" y="255" width="1" height="3" fill="#ff0000"/>
<rect x="548" y="254" width="1" height="5" fill="#006400"/>
<rect x="547" y="256" width="3" height="3" fill="#006400"/>
<rect x="548" y="257" width="1" height="1" fill="#00ff00"/>
<rect x="550" y="256" width="3" height="5" fill="#800000"/>
<rect x="551" y="257" width="1" height="3" fill="#ff0000"/>
<rect x="553" y="257" width="3" height="4" fill="#006400"/>
<rect x="554" y="258" width="1" height="2" fill="#00ff00"/>
<rect x="557" y="253" width="1" height="7" fill="#006400"/>
<rect x="556" y="253" width="3" height="6" fill="#006400"/>
<rect x="557" y="254" width="1" height="4" fill="#00ff00"/>
<rect x="560" y="248" width="1" height="6" fill="#006400"/>
<rect x="559" y="250" width="3" height="4" fill="#006400"/>
<rect x="560" y="251" width="1" height="2" fill="#00ff00"/>
<rect x="563" y="245" width="1" height="6" fill="#006400"/>
<rect x="562" y="246" width="3" height="5" fill="#006400"/>
<rect x="563" y="247" width="1" height="3" fill="#00ff00"/>
<rect x="566" y="234" width="1" height="13" fill="#006400"/>
<rect x="565" y="242" width="3" height="5" fill="#006400"/>
<rect x="566" y="243" width="1" height="3" fill="#00ff00"/>
<rect x="569" y="238" width="1" height="11" fill="#006400"/>
<rect x="568" y="240" width="3" height="3" fill="#006400"/>
<rect x="569" y="241" width="1" height="1" fill="#00ff00"/>
<rect x="572" y="238" width="1" height="9" fill="#800000"/>
<rect x="571" y="240" width="3" height="6" fill="#800000"/>
<rect x="572" y="241" width="1" height="4" fill="#ff0000"/>
<rect x="575" y="243" width="1" height="11" fill="#800000"/>
<rect x="574" y="244" width="3" height="10" fill="#800000"/>
<rect x="575" y="245" width="1" height="8" fill="#ff0000"/>
<rect x="578" y="251" width="1" height="6" fill="#800000"/>
<rect x="577" y="253" width="3" height="3" fill="#800000"/>
<rect x="578" y="254" width="1" height="1" fill="#ff0000"/>
<rect x="581" y="251" width="1" height="6" fill="#800000"/>
<rect x="580" y="254" width="3" height="3" fill="#800000"/>
<rect x="581" y="255" width="1" height="1" fill="#ff0000"/>
<rect x="584" y="252" width="1" height="10" fill="#800000"/>
<rect x="583" y="255" width="3" height="6" fill="#800000"/>
<rect x="584" y="256" width="1" height="4" fill="#ff0000"/>
<rect x="587" y="258" width="1" height="4" fill="#800000"/>
<rect x="586" y="259" width="3" height="3" fill="#800000"/>
<rect x="587" y="260" width="1" height="1" fill="#ff0000"/>
<rect x="590" y="250" width="1" height="12" fill="#006400"/>
<rect x="589" y="254" width="3" height="8" fill="#006400"/>
<rect x="590" y="255" width="1" height="6" fill="#00ff00"/>
<rect x="593" y="251" width="1" height="8" fill="#800000"/>
<rect x="592" y="253" width="3" height="6" fill="#800000"/>
<rect x="593" y="254" width="1" height="4" fill="#ff0000"/>
<rect x="596" y="249" width="1" height="10" fill="#006400"/>
<rect x="595" y="251" width="3" height="8" fill="#006400"/>
<rect x="596" y="252" width="1" height="6" fill="#00ff00"/>
<rect x="599" y="244" width="1" height="8" fill="#006400"/>
<rect x="598" y="247" width="3" height="5" fill="#006400"/>
<rect x="599" y="248" width="1" height="3" fill="#00ff00"/>
<rect x="602" y="247" width="1" height="8" fill="#800000"/>
<rect x="601" y="247" width="3" height="6" fill="#800000"/>
<rect x="602" y="248" width="1" height="4" fill="#ff0000"/>
<rect x="605" y="247" width="1" height="11" fill="#006400"/>
<rect x="604" y="250" width="3" height="3" fill="#006400"/>
<rect x="605" y="251" width="1" height="1" fill="#00ff00"/>
<rect x="608" y="243" width="1" height="7" fill="#006400"/>
<rect x="607" y="245" width="3" height="5" fill="#006400"/>
<rect x="608" y="246" width="1" height="3" fill="#00ff00"/>
<rect x="611" y="242" width="1" height="12" fill="#800000"/>
<rect x="610" y="244" width="3" height="7" fill="#800000"/>
<rect x="611" y="245" width="1" height="5" fill="#ff0000"/>
<rect x="614" y="245" width="1" height="6" fill="#006400"/>
<rect x="613" y="248" width="3" height="3" fill="#006400"/>
<rect x="614" y="249" width="1" height="1" fill="#00ff00"/>
<rect x="617" y="246" width="1" height="7" fill="#800000"/>
<rect x="616" y="248" width="3" height="3" fill="#800000"/>
<rect x="617" y="249" width="1" height="1" fill="#ff0000"/>
<rect x="620" y="243" width="1" height="12" fill="#006400"/>
<rect x="619" y="246" width="3" height="4" fill="#006400"/>
<rect x="620" y="247" width="1" height="2" fill="#00ff00"/>
<rect x="623" y="243" width="1" height="11" fill="#800000"/>
<rect x="622" y="246" width="3" height="5" fill="#800000"/>
<rect x="623" y="247" width="1" height="3" fill="#ff0000"/>
<rect x="626" y="246" width="1" height="11" fill="#800000"/>
<rect x="625" y="250" width="3" height="7" fill="#800000"/>
<rect x="626" y="251" width="1" height="5" fill="#ff0000"/>
<rect x="629" y="250" width="1" height="11" fill="#800000"/>
<rect x="628" y="254" width="3" height="7" fill="#800000"/>
<rect x="629" y="255" width="1" height="5" fill="#ff0000"/>
<rect x="632" y="258" width="1" height="9" fill="#800000"/>
<rect x="631" y="259" width="3" height="8" fill="#800000"/>
<rect x="632" y="260" width="1" height="6" fill="#ff0000"/>
<rect x="635" y="263" width="1" height="5" fill="#800000"/>
<rect x="634" y="265" width="3" height="2" fill="#800000"/>
<rect x="638" y="262" width="1" height="8" fill="#800000"/>
<rect x="637" y="266" width="3" height="4" fill="#800000"/>
<rect x="638" y="267" width="1" height="2" fill="#ff0000"/>
<rect x="641" y="265" width="1" height="5" fill="#006400"/>
<rect x="640" y="267" width="3" height="3" fill="#006400"/>
<rect x="641" y="268" width="1" height="1" fill="#00ff00"/>
<rect x="644" y="265" width="1" height="8" fill="#800000"/>
<rect x="643" y="266" width="3" height="7" fill="#800000"/>
<rect x="644" y="267" width="1" height="5" fill="#ff0000"/>
<rect x="647" y="269" width="1" height="4" fill="#006400"/>
<rect x="646" y="269" width="3" height="3" fill="#006400"/>
<rect x="647" y="270" width="1" height="1" fill="#00ff00"/>
<rect x="649" y="269" width="3" height="5" fill="#800000"/>
<rect x="650" y="270" width="1" height="3" fill="#ff0000"/>
<rect x="652" y="264" width="3" height="10" fill="#006400"/>
<rect x="653" y="265" width="1" height="8" fill="#00ff00"/>
<rect x="656" y="260" width="1" height="8" fill="#800000"/>
<rect x="655" y="265" width="3" height="3" fill="#800000"/>
<rect x="656" y="266" width="1" height="1" fill="#ff0000"/>
<rect x="659" y="267" width="1" height="6" fill="#800000"/>
<rect x="658" y="267" width="3" height="4" fill="#800000"/>
<rect x="659" y="268" width="1" height="2" fill="#ff0000"/>
<rect x="662" y="266" width="1" height="8" fill="#006400"/>
<rect x="661" y="269" width="3" height="2" fill="#006400"/>
<rect x="665" y="267" width="1" height="6" fill="#800000"/>
<rect x="664" y="268" width="3" height="3" fill="#800000"/>
<rect x="665" y="269" width="1" height="1" fill="#ff0000"/>
<rect x="668" y="266" width="1" height="7" fill="#800000"/>
<rect x="667" y="270" width="3" height="3" fill="#800000"/>
<rect x="668" y="271" width="1" height="1" fill="#ff0000"/>
<rect x="671" y="269" width="1" height="8" fill="#800000"/>
<rect x="670" y="270" width="3" height="7" fill="#800000"/>
<rect x="671" y="271" width="1" height="5" fill="#ff0000"/>
<rect x="673" y="270" width="3" height="7" fill="#006400"/>
<rect x="674" y="271" width="1" height="5" fill="#00ff00"/>
<rect x="677" y="269" width="1" height="8" fill="#800000"/>
<rect x="676" y="270" width="3" height="7" fill="#800000"/>
<rect x="677" y="271" width="1" height="5" fill="#ff0000"/>
<rect x="680" y="274" width="1" height="5" fill="#800000"/>
<rect x="679" y="276" width="3" height="3" fill="#800000"/>
<rect x="680" y="277" width="1" height="1" fill="#ff0000"/>
<rect x="683" y="273" width="1" height="7" fill="#006400"/>
<rect x="682" y="274" width="3" height="5" fill="#006400"/>
<rect x="683" y="275" width="1" height="3" fill="#00ff00"/>
<rect x="686" y="272" width="1" height="6" fill="#006400"/>
<rect x="685" y="273" width="3" height="3" fill="#006400"/>
<rect x="686" y="274" width="1" height="1" fill="#00ff00"/>
<rect x="689" y="268" width="1" height="7" fill="#006400"/>
<rect x="688" y="269" width="3" height="6" fill="#006400"/>
<rect x="689" y="270" width="1" height="4" fill="#00ff00"/>
<rect x="692" y="268" width="1" height="9" fill="#800000"/>
<rect x="691" y="269" width="3" height="7" fill="#800000"/>
<rect x="692" y="270" width="1" height="5" fill="#ff0000"/>
<rect x="695" y="271" width="1" height="6" fill="#006400"/>
<rect x="694" y="274" width="3" height="3" fill="#006400"/>
<rect x="695" y="275" width="1" height="1" fill="#00ff00"/>
<rect x="698" y="263" width="1" height="14" fill="#006400"/>
<rect x="697" y="269" width="3" height="8" fill="#006400"/>
<rect x="698" y="270" width="1" height="6" fill="#00ff00"/>
<rect x="701" y="267" width="1" height="9" fill="#800000"/>
<rect x="700" y="269" width="3" height="4" fill="#800000"/>
<rect x="701" y="270" width="1" height="2" fill="#ff0000"/>
<rect x="704" y="267" width="1" height="8" fill="#006400"/>
<rect x="703" y="271" width="3" height="2" fill="#006400"/>
<rect x="707" y="270" width="1" height="9" fill="#006400"/>
<rect x="706" y="270" width="3" height="3" fill="#006400"/>
<rect x="707" y="271" width="1" height="1" fill="#00ff00"/>
<rect x="710" y="265" width="1" height="12" fill="#006400"/>
<rect x="709" y="267" width="3" height="5" fill="#006400"/>
<rect x="710" y="268" width="1" height="3" fill="#00ff00"/>
<rect x="713" y="248" width="1" height="21" fill="#006400"/>
<rect x="712" y="260" width="3" height="8" fill="#006400"/>
<rect x="713" y="261" width="1" height="6" fill="#00ff00"/>
<rect x="716" y="254" width="1" height="10" fill="#006400"/>
<rect x="715" y="257" width="3" height="4" fill="#006400"/>
<rect x="716" y="258" width="1" height="2" fill="#00ff00"/>
<rect x="719" y="256" width="1" height="9" fill="#800000"/>
<rect x="718" y="257" width="3" height="4" fill="#800000"/>
<rect x="719" y="258" width="1" height="2" fill="#ff0000"/>
<rect x="722" y="260" width="1" height="10" fill="#800000"/>
<rect x="721" y="261" width="3" height="7" fill="#800000"/>
<rect x="722" y="262" width="1" height="5" fill="#ff0000"/>
<rect x="725" y="261" width="1" height="9" fill="#006400"/>
<rect x="724" y="265" width="3" height="3" fill="#006400"/>
<rect x="725" y="266" width="1" height="1" fill="#00ff00"/>
<rect x="728" y="264" width="1" height="11" fill="#800000"/>
<rect x="727" y="265" width="3" height="10" fill="#800000"/>
<rect x="728" y="266" width="1" height="8" fill="#ff0000"/>
<rect x="731" y="260" width="1" height="18" fill="#006400"/>
<rect x="730" y="267" width="3" height="9" fill="#006400"/>
<rect x="731" y="268" width="1" height="7" fill="#00ff00"/>
<rect x="734" y="261" width="1" height="10" fill="#006400"/>
<rect x="733" y="262" width="3" height="5" fill="#006400"/>
<rect x="734" y="263" width="1" height="3" fill="#00ff00"/>
<rect x="737" y="243" width="1" height="21" fill="#006400"/>
<rect x="736" y="252" width="3" height="12" fill="#006400"/>
<rect x="737" y="253" width="1" height="10" fill="#00ff00"/>
<rect x="740" y="241" width="1" height="15" fill="#006400"/>
<rect x="739" y="247" width="3" height="6" fill="#006400"/>
<rect x="740" y="248" width="1" height="4" fill="#00ff00"/>
<rect x="743" y="219" width="1" height="29" fill="#006400"/>
<rect x="742" y="225" width="3" height="23" fill="#006400"/>
<rect x="743" y="226" width="1" height="21" fill="#00ff00"/>
<rect x="746" y="194" width="1" height="29" fill="#006400"/>
<rect x="745" y="197" width="3" height="26" fill="#006400"/>
<rect x="746" y="198" width="1" height="24" fill="#00ff00"/>
<rect x="749" y="195" width="1" height="28" fill="#800000"/>
<rect x="748" y="195" width="3" height="26" fill="#800000"/>
<rect x="749" y="196" width="1" height="24" fill="#ff0000"/>
<rect x="752" y="205" width="1" height="26" fill="#006400"/>
<rect x="751" y="211" width="3" height="10" fill="#006400"/>
<rect x="752" y="212" width="1" height="8" fill="#00ff00"/>
<rect x="755" y="189" width="1" height="25" fill="#006400"/>
<rect x="754" y="210" width="3" height="3" fill="#006400"/>
<rect x="755" y="211" width="1" height="1" fill="#00ff00"/>
<rect x="758" y="192" width="1" height="20" fill="#006400"/>
<rect x="757" y="202" width="3" height="9" fill="#006400"/>
<rect x="758" y="203" width="1" height="7" fill="#00ff00"/>
<rect x="761" y="135" width="1" height="68" fill="#006400"/>
<rect x="760" y="178" width="3" height="25" fill="#006400"/>
<rect x="761" y="179" width="1" height="23" fill="#00ff00"/>
<rect x="764" y="140" width="1" height="66" fill="#800000"/>
<rect x="763" y="178" width="3" height="28" fill="#800000"/>
<rect x="764" y="179" width="1" height="26" fill="#ff0000"/>
<rect x="767" y="195" width="1" height="35" fill="#800000"/>
<rect x="766" y="204" width="3" height="26" fill="#800000"/>
<rect x="767" y="205" width="1" height="24" fill="#ff0000"/>
<rect x="770" y="221" width="1" height="20" fill="#800000"/>
<rect x="769" y="227" width="3" height="10" fill="#800000"/>
<rect x="770" y="228" width="1" height="8" fill="#ff0000"/>
<rect x="773" y="203" width="1" height="35" fill="#006400"/>
<rect x="772" y="222" width="3" height="15" fill="#006400"/>
<rect x="773" y="223" width="1" height="13" fill="#00ff00"/>
<rect x="776" y="216" width="1" height="19" fill="#800000"/>
<rect x="775" y="222" width="3" height="13" fill="#800000"/>
<rect x="776" y="223" width="1" height="11" fill="#ff0000"/>
<rect x="779" y="209" width="1" height="32" fill="#800000"/>
<rect x="778" y="234" width="3" height="3" fill="#800000"/>
<rect x="779" y="235" width="1" height="1" fill="#ff0000"/>
<rect x="782" y="237" width="1" height="22" fill="#800000"/>
<rect x="781" y="237" width="3" height="20" fill="#800000"/>
<rect x="782" y="238" width="1" height="18" fill="#ff0000"/>
<rect x="785" y="255" width="1" height="32" fill="#800000"/>
<rect x="784" y="255" width="3" height="26" fill="#800000"/>
<rect x="785" y="256" width="1" height="24" fill="#ff0000"/>
<rect x="788" y="271" width="1" height="16" fill="#006400"/>
<rect x="787" y="278" width="3" height="3" fill="#006400"/>
<rect x="788" y="279" width="1" height="1" fill="#00ff00"/>
<rect x="791" y="269" width="1" height="25" fill="#006400"/>
<rect x="790" y="270" width="3" height="9" fill="#006400"/>
<rect x="791" y="271" width="1" height="7" fill="#00ff00"/>
<rect x="794" y="264" width="1" height="18" fill="#800000"/>
<rect x="793" y="271" width="3" height="8" fill="#800000"/>
<rect x="794" y="272" width="1" height="6" fill="#ff0000"/>
<rect x="797" y="276" width="1" height="13" fill="#800000"/>
<rect x="796" y="277" width="3" height="12" fill="#800000"/>
<rect x="797" y="278" width="1" height="10" fill="#ff0000"/>
<rect x="800" y="280" width="1" height="12" fill="#006400"/>
<rect x="799" y="285" width="3" height="4" fill="#006400"/>
<rect x="800" y="286" width="1" height="2" fill="#00ff00"/>
<rect x="803" y="278" width="1" height="12" fill="#800000"/>
<rect x="802" y="286" width="3" height="2" fill="#800000"/>
<rect x="806" y="268" width="1" height="20" fill="#006400"/>
<rect x="805" y="270" width="3" height="18" fill="#006400"/>
<rect x="806" y="271" width="1" height="16" fill="#00ff00"/>
<rect x="809" y="263" width="1" height="31" fill="#800000"/>
<rect x="808" y="270" width="3" height="22" fill="#800000"/>
<rect x="809" y="271" width="1" height="20" fill="#ff0000"/>
<rect x="812" y="288" width="1" height="9" fill="#800000"/>
<rect x="811" y="290" width="3" height="5" fill="#800000"/>
<rect x="812" y="291" width="1" height="3" fill="#ff0000"/>
<rect x="815" y="288" width="1" height="18" fill="#800000"/>
<rect x="814" y="292" width="3" height="12" fill="#800000"/>
<rect x="815" y="293" width="1" height="10" fill="#ff0000"/>
<rect x="818" y="302" width="1" height="11" fill="#800000"/>
<rect x="817" y="302" width="3" height="9" fill="#800000"/>
<rect x="818" y="303" width="1" height="7" fill="#ff0000"/>
<rect x="821" y="289" width="1" height="24" fill="#006400"/>
<rect x="820" y="304" width="3" height="8" fill="#006400"/>
<rect x="821" y="305" width="1" height="6" fill="#00ff00"/>
<rect x="824" y="288" width="1" height="17" fill="#006400"/>
<rect x="823" y="291" width="3" height="14" fill="#006400"/>
<rect x="824" y="292" width="1" height="12" fill="#00ff00"/>
<rect x="827" y="289" width="1" height="15" fill="#800000"/>
<rect x="826" y="291" width="3" height="10" fill="#800000"/>
<rect x="827" y="292" width="1" height="8" fill="#ff0000"/>
<rect x="830" y="293" width="1" height="19" fill="#006400"/>
<rect x="829" y="310" width="3" height="2" fill="#006400"/>
<rect x="833" y="305" width="1" height="7" fill="#006400"/>
<rect x="832" y="305" width="3" height="6" fill="#006400"/>
<rect x="833" y="306" width="1" height="4" fill="#00ff00"/>
<rect x="835" y="305" width="3" height="13" fill="#800000"/>
<rect x="836" y="306" width="1" height="11" fill="#ff0000"/>
<rect x="839" y="307" width="1" height="11" fill="#006400"/>
<rect x="838" y="309" width="3" height="9" fill="#006400"/>
<rect x="839" y="310" width="1" height="7" fill="#00ff00"/>
<rect x="842" y="307" width="1" height="12" fill="#800000"/>
<rect x="841" y="309" width="3" height="10" fill="#800000"/>
<rect x="842" y="310" width="1" height="8" fill="#ff0000"/>
<rect x="845" y="314" width="1" height="9" fill="#006400"/>
<rect x="844" y="316" width="3" height="3" fill="#006400"/>
<rect x="845" y="317" width="1" height="1" fill="#00ff00"/>
<rect x="847" y="286" width="3" height="32" fill="#006400"/>
<rect x="848" y="287" width="1" height="30" fill="#00ff00"/>
<rect x="851" y="256" width="1" height="33" fill="#800000"/>
<rect x="850" y="286" width="3" height="3" fill="#800000"/>
<rect x="851" y="287" width="1" height="1" fill="#ff0000"/>
<rect x="854" y="275" width="1" height="19" fill="#800000"/>
<rect x="853" y="287" width="3" height="3" fill="#800000"/>
<rect x="854" y="288" width="1" height="1" fill="#ff0000"/>
<rect x="857" y="278" width="1" height="17" fill="#006400"/>
<rect x="856" y="282" width="3" height="8" fill="#006400"/>
<rect x="857" y="283" width="1" height="6" fill="#00ff00"/>
<rect x="860" y="275" width="1" height="24" fill="#800000"/>
<rect x="859" y="282" width="3" height="12" fill="#800000"/>
<rect x="860" y="283" width="1" height="10" fill="#ff0000"/>
<rect x="863" y="273" width="1" height="20" fill="#006400"/>
<rect x="862" y="276" width="3" height="17" fill="#006400"/>
<rect x="863" y="277" width="1" height="15" fill="#00ff00"/>
<rect x="866" y="264" width="1" height="17" fill="#006400"/>
<rect x="865" y="268" width="3" height="9" fill="#006400"/>
<rect x="866" y="269" width="1" height="7" fill="#00ff00"/>
<rect x="869" y="259" width="1" height="29" fill="#800000"/>
<rect x="868" y="267" width="3" height="11" fill="#800000"/>
<rect x="869" y="268" width="1" height="9" fill="#ff0000"/>
<rect x="872" y="274" width="1" height="31" fill="#800000"/>
<rect x="871" y="277" width="3" height="10" fill="#800000"/>
<rect x="872" y="278" width="1" height="8" fill="#ff0000"/>
<rect x="875" y="275" width="1" height="17" fill="#006400"/>
<rect x="874" y="286" width="3" height="2" fill="#006400"/>
<rect x="878" y="280" width="1" height="20" fill="#800000"/>
<rect x="877" y="286" width="3" height="5" fill="#800000"/>
<rect x="878" y="287" width="1" height="3" fill="#ff0000"/>
<rect x="881" y="288" width="1" height="36" fill="#800000"/>
<rect x="880" y="289" width="3" height="35" fill="#800000"/>
<rect x="881" y="290" width="1" height="33" fill="#ff0000"/>
<rect x="884" y="304" width="1" height="23" fill="#006400"/>
<rect x="883" y="314" width="3" height="11" fill="#006400"/>
<rect x="884" y="315" width="1" height="9" fill="#00ff00"/>
<rect x="887" y="295" width="1" height="24" fill="#006400"/>
<rect x="886" y="298" width="3" height="16" fill="#006400"/>
<rect x="887" y="299" width="1" height="14" fill="#00ff00"/>
<rect x="889" y="299" width="3" height="30" fill="#800000"/>
<rect x="890" y="300" width="1" height="28" fill="#ff0000"/>
<rect x="893" y="318" width="1" height="13" fill="#006400"/>
<rect x="892" y="325" width="3" height="5" fill="#006400"/>
<rect x="893" y="326" width="1" height="3" fill="#00ff00"/>
<rect x="896" y="319" width="1" height="17" fill="#800000"/>
<rect x="895" y="325" width="3" height="6" fill="#800000"/>
<rect x="896" y="326" width="1" height="4" fill="#ff0000"/>
<rect x="899" y="325" width="1" height="13" fill="#006400"/>
<rect x="898" y="325" width="3" height="7" fill="#006400"/>
<rect x="899" y="326" width="1" height="5" fill="#00ff00"/>
<rect x="902" y="321" width="1" height="14" fill="#006400"/>
<rect x="901" y="322" width="3" height="2" fill="#006400"/>
<rect x="905" y="319" width="1" height="11" fill="#800000"/>
<rect x="904" y="322" width="3" height="3" fill="#800000"/>
<rect x="905" y="323" width="1" height="1" fill="#ff0000"/>
<rect x="908" y="321" width="1" height="12" fill="#800000"/>
<rect x="907" y="323" width="3" height="3" fill="#800000"/>
<rect x="908" y="324" width="1" height="1" fill="#ff0000"/>
<rect x="911" y="324" width="1" height="10" fill="#800000"/>
<rect x="910" y="324" width="3" height="4" fill="#800000"/>
<rect x="911" y="325" width="1" height="2" fill="#ff0000"/>
<rect x="914" y="314" width="1" height="23" fill="#800000"/>
<rect x="913" y="326" width="3" height="3" fill="#800000"/>
<rect x="914" y="327" width="1" height="1" fill="#ff0000"/>
<rect x="917" y="311" width="1" height="23" fill="#006400"/>
<rect x="916" y="312" width="3" height="17" fill="#006400"/>
<rect x="917" y="313" width="1" height="15" fill="#00ff00"/>
<rect x="920" y="280" width="1" height="32" fill="#006400"/>
<rect x="919" y="291" width="3" height="21" fill="#006400"/>
<rect x="920" y="292" width="1" height="19" fill="#00ff00"/>
<rect x="923" y="283" width="1" height="16" fill="#800000"/>
<rect x="922" y="291" width="3" height="4" fill="#800000"/>
<rect x="923" y="292" width="1" height="2" fill="#ff0000"/>
<rect x="926" y="286" width="1" height="14" fill="#006400"/>
<rect x="925" y="292" width="3" height="3" fill="#006400"/>
<rect x="926" y="293" width="1" height="1" fill="#00ff00"/>
<rect x="929" y="292" width="1" height="10" fill="#800000"/>
<rect x="928" y="292" width="3" height="6" fill="#800000"/>
<rect x="929" y="293" width="1" height="4" fill="#ff0000"/>
<rect x="932" y="289" width="1" height="15" fill="#800000"/>
<rect x="931" y="297" width="3" height="4" fill="#800000"/>
<rect x="932" y="298" width="1" height="2" fill="#ff0000"/>
<rect x="935" y="298" width="1" height="19" fill="#800000"/>
<rect x="934" y="299" width="3" height="16" fill="#800000"/>
<rect x="935" y="300" width="1" height="14" fill="#ff0000"/>
<rect x="938" y="311" width="1" height="11" fill="#800000"/>
<rect x="937" y="313" width="3" height="3" fill="#800000"/>
<rect x="938" y="314" width="1" height="1" fill="#ff0000"/>
<rect x="941" y="312" width="1" height="18" fill="#800000"/>
<rect x="940" y="314" width="3" height="13" fill="#800000"/>
<rect x="941" y="315" width="1" height="11" fill="#ff0000"/>
<rect x="944" y="321" width="1" height="10" fill="#800000"/>
<rect x="943" y="326" width="3" height="5" fill="#800000"/>
<rect x="944" y="327" width="1" height="3" fill="#ff0000"/>
<rect x="947" y="323" width="1" height="13" fill="#006400"/>
<rect x="946" y="324" width="3" height="8" fill="#006400"/>
<rect x="947" y="325" width="1" height="6" fill="#00ff00"/>
<rect x="950" y="323" width="1" height="11" fill="#800000"/>
<rect x="949" y="324" width="3" height="5" fill="#800000"/>
<rect x="950" y="325" width="1" height="3" fill="#ff0000"/>
<rect x="953" y="326" width="1" height="12" fill="#800000"/>
<rect x="952" y="327" width="3" height="11" fill="#800000"/>
<rect x="953" y="328" width="1" height="9" fill="#ff0000"/>
<rect x="956" y="331" width="1" height="8" fill="#006400"/>
<rect x="955" y="336" width="3" height="3" fill="#006400"/>
<rect x="956" y="337" width="1" height="1" fill="#00ff00"/>
<rect x="959" y="335" width="1" height="9" fill="#800000"/>
<rect x="958" y="337" width="3" height="4" fill="#800000"/>
<rect x="959" y="338" width="1" height="2" fill="#ff0000"/>
<rect x="962" y="333" width="1" height="11" fill="#006400"/>
<rect x="961" y="336" width="3" height="3" fill="#006400"/>
<rect x="962" y="337" width="1" height="1" fill="#00ff00"/>
<rect x="965" y="330" width="1" height="9" fill="#800000"/>
<rect x="964" y="336" width="3" height="3" fill="#800000"/>
<rect x="965" y="337" width="1" height="1" fill="#ff0000"/>
<rect x="968" y="337" width="1" height="6" fill="#800000"/>
<rect x="967" y="338" width="3" height="3" fill="#800000"/>
<rect x="968" y="339" width="1" height="1" fill="#ff0000"/>
<rect x="971" y="338" width="1" height="13" fill="#800000"/>
<rect x="970" y="339" width="3" height="12" fill="#800000"/>
<rect x="971" y="340" width="1" height="10" fill="#ff0000"/>
<rect x="974" y="348" width="1" height="12" fill="#800000"/>
<rect x="973" y="350" width="3" height="10" fill="#800000"/>
<rect x="974" y="351" width="1" height="8" fill="#ff0000"/>
<rect x="977" y="346" width="1" height="14" fill="#006400"/>
<rect x="976" y="350" width="3" height="10" fill="#006400"/>
<rect x="977" y="351" width="1" height="8" fill="#00ff00"/>
<rect x="980" y="329" width="1" height="19" fill="#006400"/>
<rect x="979" y="333" width="3" height="15" fill="#006400"/>
<rect x="980" y="334" width="1" height="13" fill="#00ff00"/>
<rect x="983" y="331" width="1" height="10" fill="#006400"/>
<rect x="982" y="331" width="3" height="3" fill="#006400"/>
<rect x="983" y="332" width="1" height="1" fill="#00ff00"/>
<rect x="986" y="327" width="1" height="20" fill="#800000"/>
<rect x="985" y="331" width="3" height="16" fill="#800000"/>
<rect x="986" y="332" width="1" height="14" fill="#ff0000"/>
<rect x="988" y="346" width="3" height="11" fill="#800000"/>
<rect x="989" y="347" width="1" height="9" fill="#ff0000"/>
<rect x="992" y="355" width="1" height="12" fill="#800000"/>
<rect x="991" y="356" width="3" height="9" fill="#800000"/>
<rect x="992" y="357" width="1" height="7" fill="#ff0000"/>
<rect x="995" y="357" width="1" height="8" fill="#006400"/>
<rect x="994" y="360" width="3" height="5" fill="#006400"/>
<rect x="995" y="361" width="1" height="3" fill="#00ff00"/>
<rect x="998" y="360" width="1" height="17" fill="#800000"/>
<rect x="997" y="360" width="3" height="15" fill="#800000"/>
<rect x="998" y="361" width="1" height="13" fill="#ff0000"/>
<rect x="1001" y="363" width="1" height="13" fill="#006400"/>
<rect x="1000" y="365" width="3" height="11" fill="#006400"/>
<rect x="1001" y="366" width="1" height="9" fill="#00ff00"/>
<rect x="1004" y="358" width="1" height="12" fill="#006400"/>
<rect x="1003" y="358" width="3" height="9" fill="#006400"/>
<rect x="1004" y="359" width="1" height="7" fill="#00ff00"/>
<rect x="1007" y="342" width="1" height="17" fill="#006400"/>
<rect x="1006" y="356" width="3" height="3" fill="#006400"/>
<rect x="1007" y="357" width="1" height="1" fill="#00ff00"/>
<rect x="1010" y="354" width="1" height="19" fill="#800000"/>
<rect x="1009" y="356" width="3" height="17" fill="#800000"/>
<rect x="1010" y="357" width="1" height="15" fill="#ff0000"/>
<rect x="1013" y="363" width="1" height="9" fill="#006400"/>
<rect x="1012" y="368" width="3" height="4" fill="#006400"/>
<rect x="1013" y="369" width="1" height="2" fill="#00ff00"/>
<rect x="1016" y="364" width="1" height="11" fill="#800000"/>
<rect x="1015" y="368" width="3" height="3" fill="#800000"/>
<rect x="1016" y="369" width="1" height="1" fill="#ff0000"/>
<rect x="1019" y="363" width="1" height="15" fill="#800000"/>
<rect x="1018" y="368" width="3" height="9" fill="#800000"/>
<rect x="1019" y="369" width="1" height="7" fill="#ff0000"/>
<rect x="1022" y="365" width="1" height="13" fill="#006400"/>
<rect x="1021" y="374" width="3" height="3" fill="#006400"/>
<rect x="1022" y="375" width="1" height="1" fill="#00ff00"/>
<rect x="1024" y="352" width="3" height="24" fill="#006400"/>
<rect x="1025" y="353" width="1" height="22" fill="#00ff00"/>
<rect x="1027" y="352" width="3" height="22" fill="#800000"/>
<rect x="1028" y="353" width="1" height="20" fill="#ff0000"/>
<rect x="1031" y="366" width="1" height="11" fill="#800000"/>
<rect x="1030" y="372" width="3" height="5" fill="#800000"/>
<rect x="1031" y="373" width="1" height="3" fill="#ff0000"/>
<rect x="1034" y="369" width="1" height="10" fill="#006400"/>
<rect x="1033" y="370" width="3" height="7" fill="#006400"/>
<rect x="1034" y="371" width="1" height="5" fill="#00ff00"/>
<rect x="1037" y="367" width="1" height="9" fill="#006400"/>
<rect x="1036" y="368" width="3" height="3" fill="#006400"/>
<rect x="1037" y="369" width="1" height="1" fill="#00ff00"/>
<rect x="1040" y="367" width="1" height="11" fill="#800000"/>
<rect x="1039" y="369" width="3" height="9" fill="#800000"/>
<rect x="1040" y="370" width="1" height="7" fill="#ff0000"/>
<rect x="1043" y="372" width="1" height="7" fill="#800000"/>
<rect x="1042" y="376" width="3" height="3" fill="#800000"/>
<rect x="1043" y="377" width="1" height="1" fill="#ff0000"/>
<rect x="1046" y="374" width="1" height="6" fill="#006400"/>
<rect x="1045" y="375" width="3" height="3" fill="#006400"/>
<rect x="1046" y="376" width="1" height="1" fill="#00ff00"/>
<rect x="1049" y="375" width="1" height="7" fill="#800000"/>
<rect x="1048" y="376" width="3" height="6" fill="#800000"/>
<rect x="1049" y="377" width="1" height="4" fill="#ff0000"/>
<rect x="1052" y="376" width="1" height="8" fill="#006400"/>
<rect x="1051" y="377" width="3" height="5" fill="#006400"/>
<rect x="1052" y="378" width="1" height="3" fill="#00ff00"/>
<rect x="1055" y="371" width="1" height="11" fill="#006400"/>
<rect x="1054" y="376" width="3" height="3" fill="#006400"/>
<rect x="1055" y="377" width="1" height="1" fill="#00ff00"/>
<rect x="1058" y="375" width="1" height="8" fill="#800000"/>
<rect x="1057" y="376" width="3" height="5" fill="#800000"/>
<rect x="1058" y="377" width="1" height="3" fill="#ff0000"/>
<rect x="1061" y="370" width="1" height="17" fill="#800000"/>
<rect x="1060" y="380" width="3" height="7" fill="#800000"/>
<rect x="1061" y="381" width="1" height="5" fill="#ff0000"/>
<rect x="1064" y="385" width="1" height="8" fill="#800000"/>
<rect x="1063" y="386" width="3" height="7" fill="#800000"/>
<rect x="1064" y="387" width="1" height="5" fill="#ff0000"/>
<rect x="1067" y="391" width="1" height="4" fill="#800000"/>
<rect x="1066" y="392" width="3" height="3" fill="#800000"/>
<rect x="1067" y="393" width="1" height="1" fill="#ff0000"/>
</g>
<path d="M205.0 516.0 L390.0 516.0 L390.0 515.6 L394.5 515.6 L397.8 520.6 L400.0 519.1 L403.6 521.7 L406.6 519.6 L409.6 518.6 L412.6 522.7 L415.6 521.7 L418.6 520.6 L421.6 527.4 L424.6 527.4 L427.7 521.7 L430.7 517.3 L433.7 517.1 L436.7 511.3 L439.2 523.7 L442.2 515.3 L445.7 515.6 L448.7 515.6 L451.4 522.7 L454.3 526.7 L456.8 524.2 L460.3 521.7 L463.3 516.3 L466.3 517.6 L469.3 520.3 L472.3 517.6 L475.3 516.3 L478.4 514.6 L481.4 521.7 L484.4 523.7 L487.4 518.1 L490.4 523.4 L492.9 522.2 L495.9 524.7 L498.9 522.7 L501.9 522.2 L505.0 522.2 L508.0 514.3 L511.0 515.3 L514.5 519.6 L517.5 517.6 L520.5 515.6 L523.6 525.4 L526.6 522.7 L529.6 512.6 L532.3 526.4 L535.6 519.3 L538.6 519.3 L541.6 522.2 L544.6 513.6 L547.7 514.1 L550.7 510.3 L553.7 512.6 L556.7 523.7 L559.7 529.4 L562.7 529.4 L565.7 529.4 L568.7 526.2 L571.2 522.4 L574.3 517.6 L577.3 519.3 L580.3 515.9 L583.3 511.3 L586.3 512.3 L589.3 521.7 L592.3 516.6 L595.3 524.2 L598.4 526.4 L601.4 525.4 L604.4 524.4 L607.4 525.4 L610.4 522.4 L613.4 526.4 L616.4 526.7 L619.4 531.4 L622.4 522.7 L625.5 513.6 L628.5 511.3 L631.5 510.3 L634.5 510.3 L637.5 509.3 L640.5 509.3 L643.6 505.3 L646.6 507.3 L649.6 503.3 L652.3 515.6 L655.6 516.3 L658.6 507.6 L661.6 505.3 L664.6 509.3 L667.7 503.3 L670.7 497.3 L673.7 502.3 L676.7 498.6 L679.7 496.2 L682.7 503.3 L685.7 506.3 L688.7 509.3 L691.2 503.6 L694.3 503.6 L697.3 512.3 L700.3 506.6 L703.3 508.3 L706.3 500.3 L709.3 505.3 L712.3 515.3 L715.3 517.3 L718.4 514.3 L721.4 507.6 L724.4 513.3 L727.4 503.6 L730.4 510.3 L733.4 510.6 L736.4 517.3 L739.4 515.6 L742.4 515.3 L745.5 512.3 L748.5 508.3 L751.5 510.6 L754.5 513.6 L757.5 516.3 L760.5 519.3 L763.6 520.3 L766.6 516.3 L769.6 508.6 L772.6 510.6 L775.6 509.6 L778.6 510.3 L781.6 505.3 L784.6 507.3 L787.7 506.6 L790.7 508.3 L793.7 505.3 L796.7 504.6 L799.7 506.3 L802.7 506.6 L805.7 514.3 L808.7 506.3 L811.2 503.3 L814.3 498.6 L817.3 500.3 L820.3 505.3 L823.3 510.6 L826.3 502.3 L829.3 492.5 L832.3 496.2 L835.3 491.2 L838.4 497.3 L841.4 492.2 L844.4 493.5 L847.4 511.3 L850.4 518.6 L853.4 513.3 L856.4 513.6 L859.4 502.3 L862.4 520.6 L865.5 524.4 L868.5 519.3 L871.5 515.6 L874.5 517.3 L877.5 515.6 L880.5 500.3 L883.6 496.6 L886.6 504.6 L889.6 493.5 L892.6 492.5 L895.1 491.2 L898.6 494.2 L901.6 495.2 L904.6 496.2 L907.7 498.6 L910.7 495.5 L913.7 509.3 L916.7 519.3 L919.7 530.4 L922.7 529.4 L925.2 530.4 L928.7 527.4 L931.7 522.7 L934.3 502.6 L937.3 508.3 L940.3 496.6 L943.3 505.3 L946.3 507.6 L949.3 498.6 L952.3 496.6 L955.3 495.5 L958.4 496.6 L961.4 506.6 L964.4 507.6 L967.4 491.2 L970.4 490.2 L973.4 494.2 L976.4 507.6 L979.4 520.6 L982.4 525.4 L985.5 519.3 L988.5 502.3 L991.5 493.5 L994.5 499.6 L997.6 492.7 L1000.5 501.5 L1003.6 510.3 L1006.5 517.4 L1009.5 510.0 L1012.7 504.7 L1015.6 498.0 L1018.6 490.3 L1021.5 494.4 L1024.7 515.6 L1027.6 512.7 L1030.7 503.6 L1033.6 503.0 L1036.6 501.5 L1039.5 492.7 L1042.7 489.4 L1045.6 497.6 L1048.6 482.7 L1051.5 492.1 L1054.5 495.6 L1057.4 492.7 L1060.3 493.5 L1063.5 484.7 L1066.6 484.4" fill="none" stroke="#00c800" stroke-width="0.95" stroke-linejoin="round"/>
<path d="M205.0 520.3 L390.0 520.3 L390.0 520.3 L394.5 520.3 L397.8 517.6 L400.0 518.6 L403.6 516.3 L406.6 517.1 L409.6 517.3 L412.6 514.1 L415.6 515.3 L418.6 517.3 L421.6 513.6 L424.6 511.3 L427.7 514.6 L430.7 518.6 L433.7 518.1 L436.7 522.7 L439.2 511.3 L442.2 520.6 L445.7 518.3 L448.7 518.3 L451.4 512.9 L454.3 509.3 L456.8 512.6 L460.3 517.1 L463.3 520.6 L466.3 519.6 L469.3 517.6 L472.3 518.1 L475.3 520.6 L478.4 523.7 L481.4 517.6 L484.4 514.1 L487.4 517.6 L490.4 514.6 L492.9 515.3 L495.9 513.6 L498.9 516.3 L501.9 516.6 L505.0 515.9 L508.0 522.5 L511.0 522.5 L514.5 520.3 L517.5 520.3 L520.5 521.3 L523.6 513.1 L526.6 516.3 L529.6 521.3 L532.3 510.6 L535.6 515.3 L538.6 515.3 L541.6 513.6 L544.6 523.4 L547.7 521.7 L550.7 525.4 L553.7 522.2 L556.7 511.3 L559.7 505.3 L562.7 506.3 L565.7 507.3 L568.7 509.3 L571.2 512.6 L574.3 516.3 L577.3 515.6 L580.3 518.6 L583.3 522.2 L586.3 522.4 L589.3 511.3 L592.3 515.3 L595.3 507.6 L598.4 506.6 L601.4 508.3 L604.4 508.3 L607.4 507.3 L610.4 510.3 L613.4 507.6 L616.4 506.3 L619.4 502.4 L622.4 509.3 L625.5 517.6 L628.5 520.6 L631.5 522.7 L634.5 524.0 L637.5 524.4 L640.5 524.4 L643.6 528.4 L646.6 527.4 L649.6 530.4 L652.3 515.3 L655.1 514.3 L658.6 521.7 L661.6 523.4 L664.6 520.6 L667.7 525.4 L670.7 531.4 L673.7 525.4 L676.7 529.7 L679.7 534.4 L682.7 525.4 L685.7 521.3 L688.7 516.3 L691.2 521.3 L694.3 521.3 L697.3 509.6 L700.3 517.3 L703.3 514.3 L706.3 522.4 L709.3 517.3 L712.3 509.6 L715.3 509.3 L718.4 510.3 L721.4 516.3 L724.4 511.3 L727.4 520.3 L730.4 515.6 L733.4 515.3 L736.4 507.6 L739.4 508.3 L742.4 506.3 L745.5 509.3 L748.5 513.3 L751.5 512.6 L754.5 511.3 L757.5 509.6 L760.5 507.3 L763.6 506.3 L766.6 510.6 L769.6 516.6 L772.6 514.3 L775.6 515.3 L778.6 515.3 L781.6 519.3 L784.6 519.3 L787.7 519.3 L790.7 518.6 L793.7 520.6 L796.7 521.7 L799.7 520.6 L802.7 520.3 L805.7 512.6 L808.7 519.3 L811.2 523.4 L814.3 528.7 L817.3 526.7 L820.3 523.4 L823.3 517.3 L826.3 524.4 L829.3 533.4 L832.3 529.7 L835.3 535.7 L838.4 528.7 L841.4 534.4 L844.4 531.4 L847.4 512.6 L850.4 507.3 L853.4 513.3 L856.4 514.3 L859.4 522.7 L862.4 507.6 L865.5 504.6 L868.5 509.3 L871.5 511.3 L874.5 510.3 L877.5 511.6 L880.5 526.4 L883.6 529.4 L886.6 521.3 L889.6 532.7 L892.6 533.4 L895.6 533.4 L898.6 531.4 L901.6 530.4 L904.6 532.4 L907.7 529.4 L910.7 530.4 L913.7 515.6 L916.7 506.6 L919.7 498.6 L922.7 498.3 L925.2 497.3 L928.7 502.6 L931.7 506.6 L934.3 524.4 L937.3 519.3 L940.3 530.7 L943.3 522.4 L946.3 520.3 L949.3 528.4 L952.3 528.4 L955.3 531.4 L958.4 530.4 L961.4 521.3 L964.4 518.6 L967.4 535.4 L970.4 536.4 L973.4 534.7 L976.4 522.4 L979.4 507.6 L982.4 504.6 L985.5 508.6 L988.5 527.4 L991.5 536.4 L994.5 529.7 L997.6 535.6 L1000.5 526.8 L1003.6 518.0 L1006.5 512.7 L1009.5 520.3 L1012.7 526.8 L1015.6 533.9 L1018.6 540.6 L1021.5 536.2 L1024.7 516.2 L1027.6 519.7 L1030.7 527.4 L1033.6 528.2 L1036.6 529.5 L1039.5 536.6 L1042.7 542.5 L1045.6 534.5 L1048.6 549.4 L1051.5 542.3 L1054.5 536.5 L1057.4 542.3 L1060.3 540.6 L1063.5 550.0 L1066.6 550.3" fill="none" stroke="#d80000" stroke-width="0.95" stroke-linejoin="round"/>
<path d="M205.0 514.5 L390.0 514.5 L390.0 514.4 L394.5 514.4 L397.8 511.1 L400.0 512.4 L403.6 512.4 L406.6 511.1 L409.6 512.4 L412.6 513.6 L415.6 512.6 L418.6 512.3 L421.6 508.3 L424.6 510.6 L427.7 513.3 L430.7 513.6 L433.7 514.9 L436.7 515.3 L439.7 514.1 L442.7 514.6 L445.7 515.3 L448.7 514.6 L451.4 513.3 L454.3 513.3 L456.8 513.1 L460.3 509.3 L463.3 512.4 L466.3 512.4 L469.3 511.3 L472.3 513.6 L475.3 512.4 L478.4 511.3 L481.4 510.3 L484.4 511.3 L487.4 513.6 L490.4 511.3 L492.9 512.4 L495.9 511.6 L498.9 510.6 L501.9 510.3 L505.0 511.3 L508.0 511.3 L511.0 511.3 L514.5 509.3 L517.5 511.3 L520.5 512.4 L523.6 512.6 L526.6 512.6 L529.6 515.3 L532.6 512.9 L535.6 513.6 L538.6 513.6 L541.6 514.1 L544.6 512.6 L547.7 513.6 L550.7 514.6 L553.7 515.3 L556.7 514.6 L559.7 514.3 L562.7 513.6 L565.2 512.6 L568.2 514.1 L571.2 514.4 L574.3 514.4 L577.3 514.4 L580.3 515.3 L583.3 514.6 L586.3 514.4 L589.3 516.3 L592.3 517.6 L595.3 517.6 L598.4 516.6 L601.4 515.9 L604.4 516.6 L607.4 516.6 L610.4 516.6 L613.4 515.9 L616.4 516.6 L619.4 515.9 L622.4 518.3 L625.5 518.3 L628.5 517.6 L631.5 516.6 L634.5 515.6 L637.5 515.6 L640.5 515.6 L643.6 515.6 L646.6 515.6 L649.6 515.6 L652.6 518.6 L655.6 519.6 L658.6 520.3 L661.6 520.3 L664.6 519.3 L667.7 521.3 L670.7 520.3 L673.7 521.3 L676.7 521.3 L679.7 518.3 L682.7 520.3 L685.7 521.7 L688.7 522.7 L691.2 524.2 L694.3 525.7 L697.3 527.4 L700.3 525.4 L703.3 526.4 L706.3 527.7 L709.3 526.7 L712.3 524.7 L715.3 523.4 L718.4 525.4 L721.4 526.4 L724.4 524.4 L727.4 525.4 L730.4 523.7 L733.4 524.4 L736.4 524.4 L739.4 525.7 L742.4 527.4 L745.5 527.4 L748.5 527.4 L751.5 525.7 L754.5 523.4 L757.5 524.4 L760.5 523.4 L763.6 522.7 L766.6 523.7 L769.6 524.4 L772.6 523.7 L775.6 524.4 L778.6 523.7 L781.6 525.4 L784.6 522.4 L787.7 523.4 L790.7 522.4 L793.7 523.4 L796.7 523.4 L799.7 522.4 L802.7 522.4 L805.7 521.3 L808.7 522.4 L811.2 521.7 L814.3 522.4 L817.3 522.4 L820.3 521.7 L823.3 521.3 L826.3 522.4 L829.3 523.4 L832.3 523.4 L835.3 522.4 L838.4 523.4 L841.4 522.4 L844.4 524.4 L847.4 525.4 L850.4 522.7 L853.4 522.4 L856.4 520.6 L859.4 524.4 L862.4 521.7 L865.5 520.6 L868.5 520.6 L871.5 522.4 L874.5 521.7 L877.5 522.4 L880.5 522.7 L883.6 524.4 L886.6 524.4 L889.6 524.4 L892.6 524.4 L895.6 524.4 L898.6 523.7 L901.6 524.4 L904.6 521.7 L907.7 521.7 L910.7 523.4 L913.7 523.4 L916.7 522.4 L919.7 520.6 L922.7 521.3 L925.7 521.3 L928.7 519.3 L931.2 520.6 L934.3 522.4 L937.3 521.7 L940.3 522.4 L943.3 521.7 L946.3 521.7 L949.3 522.4 L952.3 524.4 L955.3 522.4 L958.4 521.7 L961.4 521.7 L964.4 523.4 L967.4 522.7 L970.4 522.4 L973.4 520.6 L976.4 520.3 L979.4 520.3 L982.4 519.3 L985.5 521.3 L988.5 519.3 L991.5 519.3 L994.5 520.6 L997.6 522.4 L1000.5 521.5 L1003.6 520.3 L1006.5 518.8 L1009.5 520.3 L1012.7 519.4 L1015.6 518.6 L1018.6 518.3 L1021.5 518.1 L1024.7 517.4 L1027.6 518.3 L1030.7 518.3 L1033.6 518.3 L1036.6 518.3 L1039.5 518.1 L1042.7 517.4 L1045.6 517.1 L1048.6 516.2 L1051.5 515.6 L1054.5 517.4 L1057.4 514.8 L1060.3 515.4 L1063.5 514.7 L1066.6 514.4" fill="none" stroke="#0000d0" stroke-width="0.95" stroke-linejoin="round"/>
<g font-family='"Liberation Sans", sans-serif'>
<text x="159.5" y="136.6" font-size="32" font-weight="bold" fill="#808080" text-anchor="start" textLength="97" lengthAdjust="spacingAndGlyphs">Wheat</text>
<text x="406.5" y="121.2" font-size="11" font-weight="bold" fill="#6a6a6a" text-anchor="start" textLength="118.7" lengthAdjust="spacingAndGlyphs">AUG 03 2016 08:45 AM</text>
<text x="614.3" y="121.2" font-size="11" font-weight="bold" fill="#6a6a6a" text-anchor="start" textLength="44.4" lengthAdjust="spacingAndGlyphs">O:407.75</text>
<text x="675.3" y="121.2" font-size="11" font-weight="bold" fill="#6a6a6a" text-anchor="start" textLength="43.6" lengthAdjust="spacingAndGlyphs">H:415.50</text>
<text x="735.5" y="121.2" font-size="11" font-weight="bold" fill="#6a6a6a" text-anchor="start" textLength="43.3" lengthAdjust="spacingAndGlyphs">L:399.25</text>
<text x="794.7" y="121.2" font-size="11" font-weight="bold" fill="#6a6a6a" text-anchor="start" textLength="44.3" lengthAdjust="spacingAndGlyphs">C:403.50</text>
<text x="950.4" y="120.2" font-size="13" font-weight="bold" fill="#009900" text-anchor="start" textLength="86.2" lengthAdjust="spacingAndGlyphs">+2.25 (0.56%)</text>
<text x="1054" y="118" font-size="9" font-weight="normal" fill="#80bdee" text-anchor="start" textLength="53" lengthAdjust="spacingAndGlyphs">© finviz.com</text>
<text x="1079.3" y="131.3" font-size="10.6" font-weight="bold" fill="#828282" text-anchor="start">2000.00</text>
<text x="1079.3" y="165.3" font-size="10.6" font-weight="bold" fill="#828282" text-anchor="start">1800.00</text>
<text x="1079.3" y="198.3" font-size="10.6" font-weight="bold" fill="#828282" text-anchor="start">1600.00</text>
<text x="1079.3" y="231.3" font-size="10.6" font-weight="bold" fill="#828282" text-anchor="start">1400.00</text>
<text x="1079.3" y="264.3" font-size="10.6" font-weight="bold" fill="#828282" text-anchor="start">1200.00</text>
<text x="1079.3" y="298.3" font-size="10.6" font-weight="bold" fill="#828282" text-anchor="start">1000.00</text>
<text x="1079.3" y="331.3" font-size="10.6" font-weight="bold" fill="#828282" text-anchor="start">800.00</text>
<text x="1079.3" y="364.3" font-size="10.6" font-weight="bold" fill="#828282" text-anchor="start">600.00</text>
<text x="1079.3" y="430.3" font-size="10.6" font-weight="bold" fill="#828282" text-anchor="start">200.00</text>
<rect x="1077" y="386" width="38" height="14" fill="#ffff00"/>
<text x="1079.3" y="397.2" font-size="10.6" font-weight="bold" fill="#333333" text-anchor="start">403.50</text>
<text x="219.0" y="440.5" font-size="10.6" font-weight="bold" fill="#828282" text-anchor="middle">1993</text>
<text x="219.0" y="580.5" font-size="10.6" font-weight="bold" fill="#828282" text-anchor="middle">1993</text>
<text x="255.0" y="440.5" font-size="10.6" font-weight="bold" fill="#828282" text-anchor="middle">1994</text>
<text x="255.0" y="580.5" font-size="10.6" font-weight="bold" fill="#828282" text-anchor="middle">1994</text>
<text x="291.0" y="440.5" font-size="10.6" font-weight="bold" fill="#828282" text-anchor="middle">1995</text>
<text x="291.0" y="580.5" font-size="10.6" font-weight="bold" fill="#828282" text-anchor="middle">1995</text>
<text x="327.0" y="440.5" font-size="10.6" font-weight="bold" fill="#828282" text-anchor="middle">1996</text>
<text x="327.0" y="580.5" font-size="10.6" font-weight="bold" fill="#828282" text-anchor="middle">1996</text>
<text x="363.0" y="440.5" font-size="10.6" font-weight="bold" fill="#828282" text-anchor="middle">1997</text>
<text x="363.0" y="580.5" font-size="10.6" font-weight="bold" fill="#828282" text-anchor="middle">1997</text>
<text x="399.0" y="440.5" font-size="10.6" font-weight="bold" fill="#828282" text-anchor="middle">1998</text>
<text x="399.0" y="580.5" font-size="10.6" font-weight="bold" fill="#828282" text-anchor="middle">1998</text>
<text x="435.0" y="440.5" font-size="10.6" font-weight="bold" fill="#828282" text-anchor="middle">1999</text>
<text x="435.0" y="580.5" font-size="10.6" font-weight="bold" fill="#828282" text-anchor="middle">1999</text>
<text x="471.0" y="440.5" font-size="10.6" font-weight="bold" fill="#828282" text-anchor="middle">2000</text>
<text x="471.0" y="580.5" font-size="10.6" font-weight="bold" fill="#828282" text-anchor="middle">2000</text>
<text x="507.0" y="440.5" font-size="10.6" font-weight="bold" fill="#828282" text-anchor="middle">2001</text>
<text x="507.0" y="580.5" font-size="10.6" font-weight="bold" fill="#828282" text-anchor="middle">2001</text>
<text x="543.0" y="440.5" font-size="10.6" font-weight="bold" fill="#828282" text-anchor="middle">2002</text>
<text x="543.0" y="580.5" font-size="10.6" font-weight="bold" fill="#828282" text-anchor="middle">2002</text>
<text x="579.0" y="440.5" font-size="10.6" font-weight="bold" fill="#828282" text-anchor="middle">2003</text>
<text x="579.0" y="580.5" font-size="10.6" font-weight="bold" fill="#828282" text-anchor="middle">2003</text>
<text x="615.0" y="440.5" font-size="10.6" font-weight="bold" fill="#828282" text-anchor="middle">2004</text>
<text x="615.0" y="580.5" font-size="10.6" font-weight="bold" fill="#828282" text-anchor="middle">2004</text>
<text x="651.0" y="440.5" font-size="10.6" font-weight="bold" fill="#828282" text-anchor="middle">2005</text>
<text x="651.0" y="580.5" font-size="10.6" font-weight="bold" fill="#828282" text-anchor="middle">2005</text>
<text x="687.0" y="440.5" font-size="10.6" font-weight="bold" fill="#828282" text-anchor="middle">2006</text>
<text x="687.0" y="580.5" font-size="10.6" font-weight="bold" fill="#828282" text-anchor="middle">2006</text>
<text x="723.0" y="440.5" font-size="10.6" font-weight="bold" fill="#828282" text-anchor="middle">2007</text>
<text x="723.0" y="580.5" font-size="10.6" font-weight="bold" fill="#828282" text-anchor="middle">2007</text>
<text x="759.0" y="440.5" font-size="10.6" font-weight="bold" fill="#828282" text-anchor="middle">2008</text>
<text x="759.0" y="580.5" font-size="10.6" font-weight="bold" fill="#828282" text-anchor="middle">2008</text>
<text x="795.0" y="440.5" font-size="10.6" font-weight="bold" fill="#828282" text-anchor="middle">2009</text>
<text x="795.0" y="580.5" font-size="10.6" font-weight="bold" fill="#828282" text-anchor="middle">2009</text>
<text x="831.0" y="440.5" font-size="10.6" font-weight="bold" fill="#828282" text-anchor="middle">2010</text>
<text x="831.0" y="580.5" font-size="10.6" font-weight="bold" fill="#828282" text-anchor="middle">2010</text>
<text x="867.0" y="440.5" font-size="10.6" font-weight="bold" fill="#828282" text-anchor="middle">2011</text>
<text x="867.0" y="580.5" font-size="10.6" font-weight="bold" fill="#828282" text-anchor="middle">2011</text>
<text x="903.0" y="440.5" font-size="10.6" font-weight="bold" fill="#828282" text-anchor="middle">2012</text>
<text x="903.0" y="580.5" font-size="10.6" font-weight="bold" fill="#828282" text-anchor="middle">2012</text>
<text x="939.0" y="440.5" font-size="10.6" font-weight="bold" fill="#828282" text-anchor="middle">2013</text>
<text x="939.0" y="580.5" font-size="10.6" font-weight="bold" fill="#828282" text-anchor="middle">2013</text>
<text x="975.0" y="440.5" font-size="10.6" font-weight="bold" fill="#828282" text-anchor="middle">2014</text>
<text x="975.0" y="580.5" font-size="10.6" font-weight="bold" fill="#828282" text-anchor="middle">2014</text>
<text x="1011.0" y="440.5" font-size="10.6" font-weight="bold" fill="#828282" text-anchor="middle">2015</text>
<text x="1011.0" y="580.5" font-size="10.6" font-weight="bold" fill="#828282" text-anchor="middle">2015</text>
<text x="1047.0" y="440.5" font-size="10.6" font-weight="bold" fill="#828282" text-anchor="middle">2016</text>
<text x="1047.0" y="580.5" font-size="10.6" font-weight="bold" fill="#828282" text-anchor="middle">2016</text>
<text x="1079.3" y="471.3" font-size="10.6" font-weight="bold" fill="#828282" text-anchor="start">150K</text>
<text x="1079.3" y="488.3" font-size="10.6" font-weight="bold" fill="#828282" text-anchor="start">100K</text>
<text x="1079.3" y="504.3" font-size="10.6" font-weight="bold" fill="#828282" text-anchor="start">50K</text>
<text x="1079.3" y="521.3" font-size="10.6" font-weight="bold" fill="#828282" text-anchor="start">0</text>
<text x="1079.3" y="537.3" font-size="10.6" font-weight="bold" fill="#828282" text-anchor="start">-50K</text>
<text x="1079.3" y="554.3" font-size="10.6" font-weight="bold" fill="#828282" text-anchor="start">-100K</text>
<text x="1079.3" y="570.3" font-size="10.6" font-weight="bold" fill="#828282" text-anchor="start">-150K</text>
<text x="159.5" y="463" font-size="15" font-weight="bold" fill="#a0a0a0" text-anchor="start" textLength="55.3" lengthAdjust="spacingAndGlyphs">WHEAT</text>
<text x="237.1" y="463" font-size="9" font-weight="normal" fill="#8a8a8a" text-anchor="start" textLength="142" lengthAdjust="spacingAndGlyphs">CONTRACTS OF 5000 BUSHELS</text>
<text x="207.7" y="563" font-size="11" font-weight="bold" fill="#33cc33" text-anchor="start" textLength="108.7" lengthAdjust="spacingAndGlyphs">Commercial Hedgers</text>
<text x="326.5" y="563" font-size="11" font-weight="bold" fill="#cc3333" text-anchor="start" textLength="72" lengthAdjust="spacingAndGlyphs">Large Traders</text>
<text x="408.5" y="563" font-size="11" font-weight="bold" fill="#3333cc" text-anchor="start" textLength="70.5" lengthAdjust="spacingAndGlyphs">Small Traders</text>
<text font-size="13.6" font-weight="bold" fill="#d0d0d0" stroke="#d0d0d0" stroke-width="0.35" textLength="76.6" lengthAdjust="spacing" transform="translate(189.0 311.4) rotate(-90)">MONTHLY</text>
<text font-size="13.6" font-weight="bold" fill="#d0d0d0" stroke="#d0d0d0" stroke-width="0.35" textLength="29.6" lengthAdjust="spacing" transform="translate(189.0 523.2) rotate(-90)">COT</text>
</g>
</svg>
</body></html>
